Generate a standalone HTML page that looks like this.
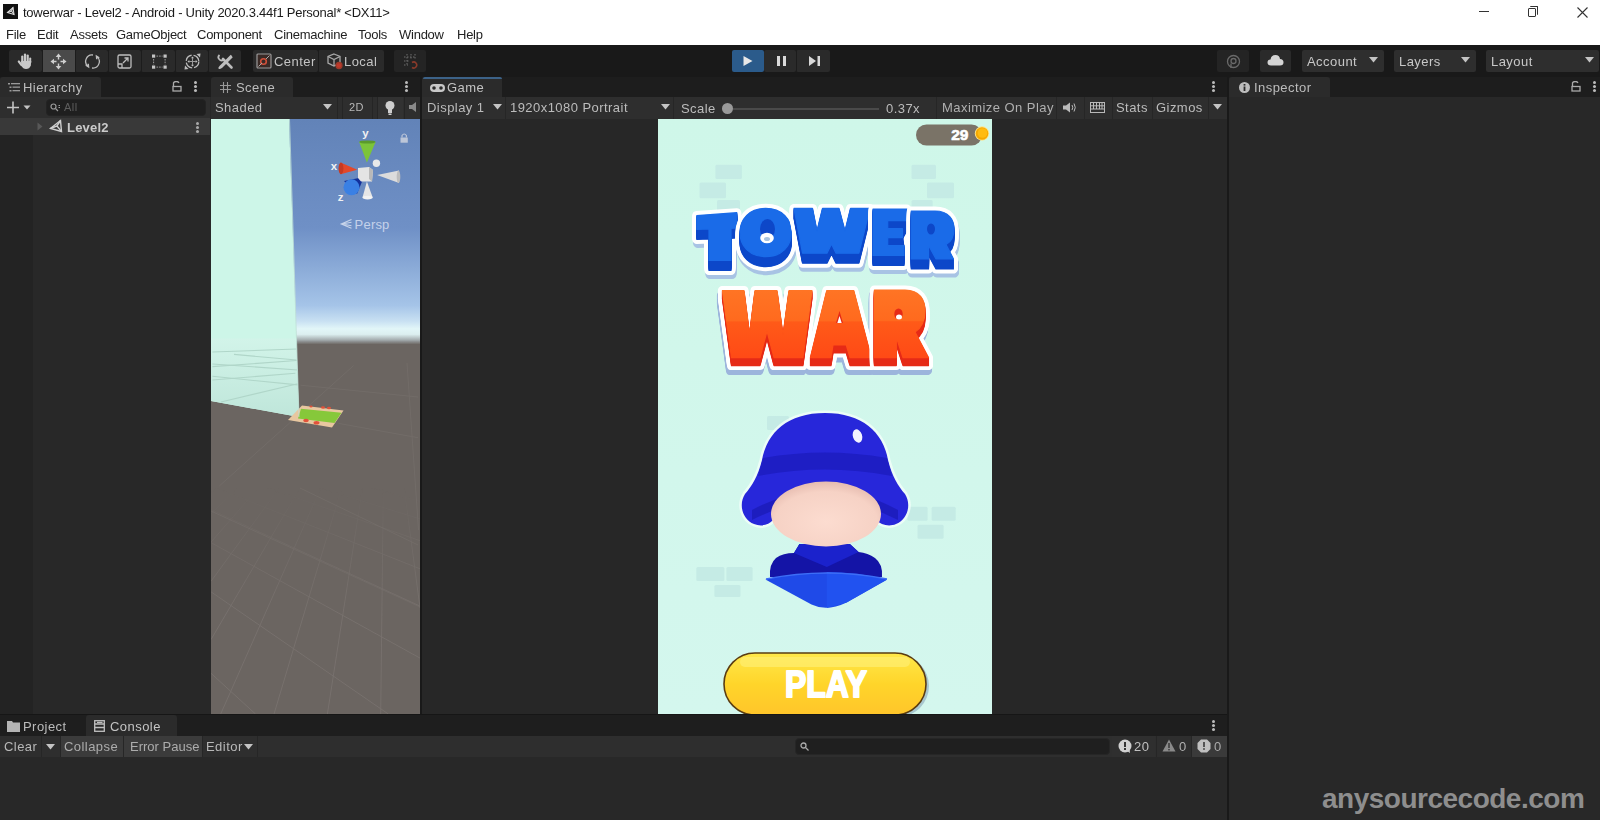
<!DOCTYPE html>
<html><head><meta charset="utf-8">
<style>
*{margin:0;padding:0;box-sizing:border-box}
html,body{width:1600px;height:820px;overflow:hidden;background:#282828;font-family:"Liberation Sans",sans-serif}
.a{position:absolute}
.t{color:#1a1a1a;font-size:13px;white-space:nowrap;letter-spacing:-0.24px;will-change:transform}
.m{position:absolute;color:#222;font-size:13px;white-space:nowrap;top:27px;letter-spacing:-0.25px;will-change:transform}
.b{position:absolute;background:#2a2a2a;border-radius:2px;top:50px;height:22px}
.lt{position:absolute;color:#c4c4c4;font-size:13px;white-space:nowrap;letter-spacing:0.45px;will-change:transform}
.tab{position:absolute;top:77px;height:20px;background:#2b2b2b;border-radius:3px 3px 0 0}
.bar{position:absolute;background:#2e2e2e}
.sep{position:absolute;background:#232323;width:1px}
</style></head><body>
<!-- title bar -->
<div class="a" style="left:0;top:0;width:1600px;height:45px;background:#fff"></div>
<div class="a" style="left:3px;top:4px;width:15px;height:15px;background:#111"></div><svg class="a" style="left:5px;top:6px" width="11" height="11" viewBox="0 0 11 11" fill="none" stroke="#ddd" stroke-width="1.1"><path d="M8 1.5L9 8.5L2.5 6.5Z"/><path d="M2.5 6.5L6.5 5L8 1.5M6.5 5L9 8.5"/></svg>
<div class="a t" style="left:23px;top:5px">towerwar - Level2 - Android - Unity 2020.3.44f1 Personal* &lt;DX11&gt;</div>
<div class="m" style="left:6px">File</div>
<div class="m" style="left:37px">Edit</div>
<div class="m" style="left:70px">Assets</div>
<div class="m" style="left:116px">GameObject</div>
<div class="m" style="left:197px">Component</div>
<div class="m" style="left:274px">Cinemachine</div>
<div class="m" style="left:358px">Tools</div>
<div class="m" style="left:399px">Window</div>
<div class="m" style="left:457px">Help</div>
<!-- window controls -->
<div class="a" style="left:1479px;top:11px;width:10px;height:1px;background:#333"></div>
<div class="a" style="left:1528px;top:8px;width:8px;height:9px;border:1px solid #333;border-radius:1px"></div>
<div class="a" style="left:1530px;top:6px;width:8px;height:9px;border-top:1px solid #333;border-right:1px solid #333;border-radius:1px"></div>
<svg class="a" style="left:1577px;top:7px" width="11" height="11"><path d="M0.5 0.5L10.5 10.5M10.5 0.5L0.5 10.5" stroke="#333" stroke-width="1.1"/></svg>

<!-- main toolbar -->
<div class="a" style="left:0;top:45px;width:1600px;height:32px;background:#191919"></div>

<div class="b" style="left:9px;width:33px"></div>
<div class="b" style="left:42px;width:33px;background:#4a4a4a;border-radius:0"></div>
<div class="b" style="left:75px;width:33px"></div>
<div class="b" style="left:108px;width:33px"></div>
<div class="b" style="left:141px;width:34px"></div>
<div class="b" style="left:175px;width:33px"></div>
<div class="b" style="left:208px;width:33px"></div>
<div class="sep" style="left:42px;top:50px;height:22px;background:#1c1c1c"></div>
<div class="sep" style="left:75px;top:50px;height:22px;background:#1c1c1c"></div>
<div class="sep" style="left:108px;top:50px;height:22px;background:#1c1c1c"></div>
<div class="sep" style="left:141px;top:50px;height:22px;background:#1c1c1c"></div>
<div class="sep" style="left:175px;top:50px;height:22px;background:#1c1c1c"></div>
<div class="sep" style="left:208px;top:50px;height:22px;background:#1c1c1c"></div>
<!-- hand -->
<svg class="a" style="left:17px;top:52px" width="17" height="18" viewBox="0 0 17 18"><g stroke="#c8c8c8" stroke-linecap="round" fill="none"><path d="M5.3 10V4.5" stroke-width="2.2"/><path d="M8 9.5V2.5" stroke-width="2.2"/><path d="M10.7 9.5V3.5" stroke-width="2.2"/><path d="M13.2 10.5V6.5" stroke-width="2"/><path d="M1.8 9.5L4.5 13" stroke-width="2.2"/></g><path d="M4.2 9H14.3L13.8 13.5Q12.5 17 9 17Q6 17 4.2 13.5Z" fill="#c8c8c8"/></svg>
<!-- move -->
<svg class="a" style="left:50px;top:53px" width="17" height="17" viewBox="0 0 17 17"><g stroke="#d0d0d0" stroke-width="1.4" fill="none"><path d="M8.5 4V6.5M8.5 10.5V13M4 8.5H6.5M10.5 8.5H13"/></g><g fill="#d0d0d0"><path d="M8.5 0.5L11.3 4H5.7Z"/><path d="M8.5 16.5L11.3 13H5.7Z"/><path d="M0.5 8.5L4 5.7V11.3Z"/><path d="M16.5 8.5L13 5.7V11.3Z"/></g></svg>
<!-- rotate -->
<svg class="a" style="left:84px;top:53px" width="17" height="17" viewBox="0 0 17 17" fill="none" stroke="#bdbdbd" stroke-width="1.3"><path d="M9 2A6.5 6.5 0 0 0 4.5 13.8"/><path d="M8 15A6.5 6.5 0 0 0 12.5 3.2"/><path d="M1.8 12.2L4.5 13.8L4.2 10.8" stroke-width="1.5"/><path d="M15.2 4.8L12.5 3.2L12.8 6.2" stroke-width="1.5"/></svg>
<!-- scale -->
<svg class="a" style="left:116px;top:53px" width="17" height="17" viewBox="0 0 17 17" fill="none" stroke="#bdbdbd" stroke-width="1.3"><rect x="2" y="2" width="13" height="13" rx="1.5"/><path d="M2 11H6V15"/><path d="M7 10L12 5M8.5 5H12V8.5"/></svg>
<!-- rect -->
<svg class="a" style="left:150px;top:52px" width="19" height="19" viewBox="0 0 19 19"><g fill="#c4c4c4"><rect x="2" y="2.5" width="3.2" height="3.2"/><rect x="13.5" y="2.5" width="3.2" height="3.2"/><rect x="2" y="13.5" width="3.2" height="3.2"/><rect x="13.5" y="13.5" width="3.2" height="3.2"/></g><path d="M6.5 4.1H12.5M6.5 15.1H12.5M3.6 7V12.5M15.1 7V12.5" stroke="#9a9a9a" stroke-width="1" stroke-dasharray="1.6 1"/></svg>
<!-- transform -->
<svg class="a" style="left:183px;top:52px" width="19" height="19" viewBox="0 0 19 19" fill="none" stroke="#bdbdbd"><circle cx="9.5" cy="9.5" r="6.3" stroke-width="1.3" stroke-dasharray="8 2"/><g fill="#bdbdbd" stroke="none"><path d="M9.5 4.5L11 6.3H8Z"/><path d="M9.5 14.5L11 12.7H8Z"/><path d="M4.5 9.5L6.3 8V11Z"/><path d="M14.5 9.5L12.7 8V11Z"/><path d="M17.5 1.5L17 5.5L13.5 2Z"/><path d="M1.5 17.5L2 13.5L5.5 17Z"/></g><path d="M9.5 6V13M6 9.5H13" stroke-width="1" stroke="#9a9a9a"/></svg>
<!-- custom tools -->
<svg class="a" style="left:216px;top:52px" width="19" height="19" viewBox="0 0 19 19" fill="none" stroke="#bdbdbd"><path d="M7 7L15.5 15.5" stroke-width="2.6" stroke-linecap="round"/><path d="M3.5 3A3 3 0 0 0 7.5 7.5" stroke-width="1.8"/><path d="M15.5 3.5L5 14L3.5 16L5.5 15L16 4.5" stroke-width="2.2" stroke-linejoin="round"/></svg>
<!-- center/local -->
<div class="b" style="left:253px;width:65px"></div>
<div class="b" style="left:318px;width:66px"></div>
<div class="sep" style="left:318px;top:50px;height:22px;background:#1c1c1c"></div>
<svg class="a" style="left:256px;top:53px" width="16" height="16" viewBox="0 0 16 16"><rect x="1" y="1" width="14" height="14" rx="1" fill="#3a2a26" stroke="#9a9a9a" stroke-width="1.2"/><circle cx="7.5" cy="8.5" r="2.8" fill="none" stroke="#d0503a" stroke-width="1.6"/><path d="M2.5 13.5L6 10M10 6L13.5 2.5" stroke="#aaa" stroke-width="1"/></svg>
<div class="lt" style="left:274px;top:54px">Center</div>
<svg class="a" style="left:326px;top:52px" width="18" height="18" viewBox="0 0 18 18" fill="none" stroke="#a8a8a8" stroke-width="1.3"><path d="M8 2L14 4.5V11L8 14L2 11V4.5Z"/><path d="M2 4.5L8 7.5L14 4.5M8 7.5V14"/><circle cx="13" cy="13.5" r="3" fill="#c0392b" stroke="#9a3a2a"/></svg>
<div class="lt" style="left:344px;top:54px">Local</div>
<!-- snap -->
<div class="b" style="left:394px;width:32px;background:#242424"></div>
<svg class="a" style="left:402px;top:52px" width="18" height="18" viewBox="0 0 18 18" fill="none" stroke="#6e6e6e" stroke-width="1"><path d="M5 2V14M9 2V8M13 2V8M2 5H14M2 9H8M2 13H6" stroke-dasharray="1.5 1.5"/><path d="M10 10.5A3 3 0 1 1 10 15.5" stroke="#8a3a2a" stroke-width="1.6"/></svg>
<!-- play controls -->
<div class="b" style="left:732px;width:32px;background:#2b5b8b"></div>
<div class="b" style="left:764px;width:32px"></div>
<div class="b" style="left:796px;width:34px"></div>
<div class="sep" style="left:796px;top:50px;height:22px;background:#1c1c1c"></div>
<svg class="a" style="left:742px;top:55px" width="12" height="12" viewBox="0 0 12 12"><path d="M1.5 1L10.5 6L1.5 11Z" fill="#e8e8e8"/></svg>
<div class="a" style="left:777px;top:56px;width:3px;height:10px;background:#dadada"></div>
<div class="a" style="left:783px;top:56px;width:3px;height:10px;background:#dadada"></div>
<svg class="a" style="left:808px;top:55px" width="14" height="12" viewBox="0 0 14 12"><path d="M1 1L8 6L1 11Z" fill="#d8d8d8"/><rect x="9.5" y="1" width="2.5" height="10" fill="#d8d8d8"/></svg>
<!-- right toolbar -->
<div class="b" style="left:1217px;width:32px;background:#242424"></div>
<svg class="a" style="left:1225px;top:53px" width="17" height="17" viewBox="0 0 17 17" fill="none" stroke="#6a6a6a" stroke-width="1.3"><circle cx="8.5" cy="8.5" r="6"/><circle cx="8.5" cy="8" r="2.5"/><path d="M6 10.5V15"/></svg>
<div class="b" style="left:1260px;width:31px"></div>
<svg class="a" style="left:1267px;top:54px" width="17" height="12" viewBox="0 0 17 12"><path d="M4 11.5Q0.5 11.5 0.5 8.5Q0.5 5.8 3.5 5.6Q4 1 8.5 1Q12.5 1 13 5Q16.5 5.2 16.5 8.3Q16.5 11.5 13 11.5Z" fill="#d4d4d4"/></svg>
<div class="b" style="left:1302px;width:82px;background:#2e2e2e"></div>
<div class="lt" style="left:1307px;top:54px;color:#c8c8c8">Account</div>
<svg class="a" style="left:1369px;top:57px" width="9" height="6"><path d="M0 0H9L4.5 5.5Z" fill="#c4c4c4"/></svg>
<div class="b" style="left:1394px;width:82px;background:#2e2e2e"></div>
<div class="lt" style="left:1399px;top:54px;color:#c8c8c8">Layers</div>
<svg class="a" style="left:1461px;top:57px" width="9" height="6"><path d="M0 0H9L4.5 5.5Z" fill="#c4c4c4"/></svg>
<div class="b" style="left:1486px;width:113px;background:#2e2e2e"></div>
<div class="lt" style="left:1491px;top:54px;color:#c8c8c8">Layout</div>
<svg class="a" style="left:1585px;top:57px" width="9" height="6"><path d="M0 0H9L4.5 5.5Z" fill="#c4c4c4"/></svg>


<!-- tab strip -->
<div class="a" style="left:0;top:77px;width:1600px;height:20px;background:#1d1d1d"></div>

<!-- Hierarchy panel -->
<div class="a" style="left:0;top:97px;width:210px;height:617px;background:#282828"></div>
<div class="a" style="left:0;top:135px;width:33px;height:579px;background:#232323"></div>
<div class="tab" style="left:0;width:101px"></div>
<svg class="a" style="left:8px;top:82px" width="12" height="11" viewBox="0 0 12 11" fill="#9a9a9a"><rect x="0" y="1" width="2" height="1.5"/><rect x="3" y="1" width="9" height="1.3"/><rect x="1.5" y="4.5" width="2" height="1.5"/><rect x="4.5" y="4.5" width="7.5" height="1.3"/><rect x="1.5" y="8" width="2" height="1.5"/><rect x="4.5" y="8" width="7.5" height="1.3"/></svg>
<div class="lt" style="left:23px;top:80px;color:#bcbcbc">Hierarchy</div>
<svg class="a" style="left:172px;top:81px" width="10" height="11" viewBox="0 0 10 11" fill="none" stroke="#aaa" stroke-width="1.3"><path d="M1.5 5.5V1.8A3 2.2 0 0 1 7 1.8"/><rect x="1" y="5.5" width="8" height="4.5"/></svg>
<div class="a" style="left:194px;top:81px;width:3px;height:3px;background:#bbb;border-radius:50%;box-shadow:0 4px 0 #bbb,0 8px 0 #bbb"></div>
<div class="bar" style="left:0;top:97px;width:210px;height:21px"></div>
<svg class="a" style="left:6px;top:101px" width="26" height="13" viewBox="0 0 26 13"><path d="M7 0.5V12.5M1 6.5H13" stroke="#c4c4c4" stroke-width="1.6"/><path d="M17.5 4.5H24.5L21 8.5Z" fill="#c4c4c4"/></svg>
<div class="a" style="left:46px;top:99px;width:160px;height:17px;background:#1f1f1f;border-radius:4px;border:1px solid #232323"></div>
<svg class="a" style="left:50px;top:103px" width="11" height="9" viewBox="0 0 11 9" fill="none" stroke="#9a9a9a" stroke-width="1.2"><circle cx="3.5" cy="3.5" r="2.5"/><path d="M5.5 5.5L8 8M8.5 2.5H10M8.5 4.5H10"/></svg>
<div class="lt" style="left:64px;top:101px;font-size:11px;color:#5e5e5e">All</div>
<div class="a" style="left:0;top:118px;width:210px;height:17px;background:#393939"></div>
<svg class="a" style="left:37px;top:122px" width="6" height="9"><path d="M0.5 0.5L5.5 4.5L0.5 8.5Z" fill="#585858"/></svg>
<svg class="a" style="left:48px;top:119px" width="16" height="15" viewBox="0 0 16 15" fill="none" stroke="#cfcfcf" stroke-width="1.4"><path d="M12.5 1.5L13.5 12.5L2.5 9.5Z"/><path d="M2.5 9.5L9 7L12.5 1.5M9 7L13.5 12.5"/></svg>
<div class="lt" style="left:67px;top:120px;color:#cacaca;font-weight:bold;font-size:13px;letter-spacing:0.2px">Level2</div>
<div class="a" style="left:196px;top:122px;width:3px;height:3px;background:#aaa;border-radius:50%;box-shadow:0 4px 0 #aaa,0 8px 0 #aaa"></div>

<!-- Scene panel -->
<div class="tab" style="left:211px;width:82px"></div>
<svg class="a" style="left:220px;top:82px" width="11" height="11" viewBox="0 0 11 11" stroke="#999" stroke-width="1.1"><path d="M3.5 0V11M7.5 0V11M0 3.5H11M0 7.5H11"/></svg>
<div class="lt" style="left:236px;top:80px;color:#bcbcbc">Scene</div>
<div class="a" style="left:405px;top:81px;width:3px;height:3px;background:#bbb;border-radius:50%;box-shadow:0 4px 0 #bbb,0 8px 0 #bbb"></div>
<div class="bar" style="left:211px;top:97px;width:209px;height:22px"></div>
<div class="lt" style="left:215px;top:100px;color:#bcbcbc">Shaded</div>
<svg class="a" style="left:323px;top:104px" width="9" height="6"><path d="M0 0H9L4.5 5.5Z" fill="#c4c4c4"/></svg>
<div class="sep" style="left:337px;top:97px;height:22px;background:#252525"></div>
<div class="sep" style="left:342px;top:97px;height:22px;background:#252525"></div>
<div class="lt" style="left:349px;top:101px;font-size:11px;color:#b8b8b8">2D</div>
<div class="sep" style="left:372px;top:97px;height:22px;background:#252525"></div>
<div class="sep" style="left:377px;top:97px;height:22px;background:#252525"></div>
<div class="a" style="left:378px;top:97px;width:25px;height:22px;background:#323232"></div>
<svg class="a" style="left:384px;top:100px" width="12" height="16" viewBox="0 0 12 16" fill="#cfcfcf"><circle cx="6" cy="5.5" r="4.5"/><rect x="4" y="9" width="4" height="4"/><rect x="4.5" y="13.5" width="3" height="1.5"/></svg>
<div class="sep" style="left:404px;top:97px;height:22px;background:#252525"></div>
<svg class="a" style="left:409px;top:101px" width="11" height="12" viewBox="0 0 11 12" fill="#8a8a8a"><rect x="0" y="4" width="3" height="4"/><path d="M3 4L7 1V11L3 8Z"/></svg>

<svg class="a" style="left:211px;top:119px" width="209" height="595" viewBox="0 0 209 595">
<defs>
<linearGradient id="sky" x1="0" y1="0" x2="0" y2="1"><stop offset="0" stop-color="#6283b8"/><stop offset="0.49" stop-color="#6f90c6"/><stop offset="0.84" stop-color="#a5c4e8"/><stop offset="0.91" stop-color="#c8e0f2"/><stop offset="0.945" stop-color="#e2f6f8"/><stop offset="0.97" stop-color="#dceff0"/><stop offset="1" stop-color="#9aa0a2"/></linearGradient>
<linearGradient id="hz" x1="0" y1="0" x2="0" y2="1"><stop offset="0" stop-color="#9aa0a2"/><stop offset="1" stop-color="#6b6561"/></linearGradient>
<linearGradient id="mg" x1="0" y1="0" x2="0" y2="1"><stop offset="0" stop-color="#d2f4e9"/><stop offset="1" stop-color="#bfe6da"/></linearGradient>
<linearGradient id="gf" x1="0" y1="0" x2="0" y2="1"><stop offset="0" stop-color="#000"/><stop offset="0.62" stop-color="#000"/><stop offset="0.72" stop-color="#888"/><stop offset="0.84" stop-color="#fff"/><stop offset="1" stop-color="#fff"/></linearGradient><mask id="gm"><rect x="0" y="0" width="209" height="595" fill="url(#gf)"/></mask><clipPath id="mc"><path d="M0 219.5H85.2L88 298L0 282Z"/></clipPath>
</defs>
<rect x="0" y="0" width="209" height="222" fill="url(#sky)"/>
<rect x="0" y="221.5" width="209" height="4" fill="url(#hz)"/>
<rect x="0" y="225" width="209" height="370" fill="#6b6561"/>
<g stroke="#726c68" stroke-width="1" fill="none"><line x1="8.3" y1="367.0" x2="142.7" y2="246.5"/><line x1="127.6" y1="304.4" x2="207.0" y2="318.7"/><line x1="89.4" y1="266.2" x2="207.0" y2="278.0"/><line x1="196.0" y1="244.0" x2="207.5" y2="411.0"/><line x1="0.0" y1="392.0" x2="209.0" y2="488.0"/><line x1="89.0" y1="369.0" x2="207.0" y2="426.0"/></g><g stroke="#78726e" stroke-width="0.9" fill="none" mask="url(#gm)"><line x1="-0.0" y1="554.3" x2="44.5" y2="595.0"/><line x1="0.0" y1="472.8" x2="177.3" y2="595.0"/><line x1="0.0" y1="423.6" x2="209.0" y2="539.1"/><line x1="0.0" y1="390.6" x2="209.0" y2="487.1"/><line x1="0.0" y1="367.0" x2="209.0" y2="449.8"/><line x1="0.0" y1="349.2" x2="209.0" y2="421.7"/><line x1="0.0" y1="335.4" x2="209.0" y2="399.9"/><line x1="0.0" y1="324.3" x2="209.0" y2="382.4"/><line x1="0.0" y1="315.2" x2="209.0" y2="368.1"/><line x1="0.0" y1="307.7" x2="209.0" y2="356.1"/><line x1="0.0" y1="301.3" x2="209.0" y2="346.0"/><line x1="0.0" y1="295.8" x2="209.0" y2="337.3"/><line x1="0.0" y1="291.0" x2="209.0" y2="329.8"/><line x1="0.0" y1="286.8" x2="209.0" y2="323.2"/><line x1="0.0" y1="283.1" x2="209.0" y2="317.4"/><line x1="0.0" y1="279.9" x2="209.0" y2="312.2"/><line x1="-0.0" y1="276.9" x2="209.0" y2="307.6"/><line x1="0.0" y1="274.3" x2="209.0" y2="303.4"/><line x1="0.0" y1="271.9" x2="209.0" y2="299.6"/><line x1="0.0" y1="269.7" x2="209.0" y2="296.2"/><line x1="0.0" y1="267.7" x2="209.0" y2="293.1"/><line x1="0.0" y1="265.9" x2="209.0" y2="290.2"/><line x1="0.0" y1="264.3" x2="209.0" y2="287.6"/><line x1="0.0" y1="262.7" x2="209.0" y2="285.1"/><line x1="0.0" y1="261.3" x2="209.0" y2="282.9"/><line x1="0.0" y1="260.0" x2="209.0" y2="280.8"/><line x1="0.0" y1="258.7" x2="209.0" y2="278.8"/><line x1="0.0" y1="257.6" x2="209.0" y2="277.0"/><line x1="0.0" y1="256.5" x2="209.0" y2="275.3"/><line x1="0.0" y1="255.5" x2="209.0" y2="273.7"/><line x1="0.0" y1="254.5" x2="209.0" y2="272.2"/><line x1="0.0" y1="253.6" x2="209.0" y2="270.8"/><line x1="0.0" y1="252.8" x2="209.0" y2="269.4"/><line x1="0.0" y1="252.0" x2="209.0" y2="268.2"/><line x1="0.0" y1="251.2" x2="209.0" y2="267.0"/><line x1="0.0" y1="250.5" x2="209.0" y2="265.8"/><line x1="0.0" y1="249.8" x2="209.0" y2="264.8"/><line x1="0.0" y1="249.2" x2="209.0" y2="263.8"/><line x1="0.0" y1="248.6" x2="209.0" y2="262.8"/><line x1="0.0" y1="248.0" x2="209.0" y2="261.9"/><line x1="0.0" y1="247.4" x2="209.0" y2="261.0"/><line x1="176.6" y1="226.0" x2="209.0" y2="251.3"/><line x1="176.3" y1="226.0" x2="209.0" y2="254.7"/><line x1="176.0" y1="226.0" x2="209.0" y2="259.2"/><line x1="175.7" y1="226.0" x2="209.0" y2="265.1"/><line x1="175.4" y1="226.0" x2="209.0" y2="273.5"/><line x1="175.1" y1="226.0" x2="209.0" y2="286.1"/><line x1="174.8" y1="226.0" x2="209.0" y2="307.4"/><line x1="174.6" y1="226.0" x2="209.0" y2="350.9"/><line x1="174.3" y1="226.0" x2="209.0" y2="488.9"/><line x1="174.0" y1="226.0" x2="169.7" y2="595.0"/><line x1="173.7" y1="226.0" x2="116.4" y2="595.0"/><line x1="173.4" y1="226.0" x2="63.0" y2="595.0"/><line x1="173.1" y1="226.0" x2="9.7" y2="595.0"/><line x1="172.8" y1="226.0" x2="0.0" y2="520.6"/><line x1="172.5" y1="226.0" x2="0.0" y2="462.3"/><line x1="172.3" y1="226.0" x2="-0.0" y2="423.1"/><line x1="172.0" y1="226.0" x2="0.0" y2="395.0"/><line x1="171.7" y1="226.0" x2="0.0" y2="373.8"/><line x1="171.4" y1="226.0" x2="0.0" y2="357.3"/><line x1="171.1" y1="226.0" x2="0.0" y2="344.1"/><line x1="170.8" y1="226.0" x2="-0.0" y2="333.2"/><line x1="170.5" y1="226.0" x2="0.0" y2="324.2"/><line x1="170.2" y1="226.0" x2="0.0" y2="316.5"/><line x1="170.0" y1="226.0" x2="0.0" y2="310.0"/><line x1="169.7" y1="226.0" x2="0.0" y2="304.3"/><line x1="169.4" y1="226.0" x2="0.0" y2="299.3"/><line x1="169.1" y1="226.0" x2="0.0" y2="294.9"/><line x1="168.8" y1="226.0" x2="0.0" y2="291.0"/><line x1="168.5" y1="226.0" x2="0.0" y2="287.4"/><line x1="168.2" y1="226.0" x2="0.0" y2="284.3"/><line x1="167.9" y1="226.0" x2="0.0" y2="281.4"/><line x1="167.7" y1="226.0" x2="0.0" y2="278.8"/><line x1="167.4" y1="226.0" x2="0.0" y2="276.4"/><line x1="167.1" y1="226.0" x2="0.0" y2="274.3"/><line x1="166.8" y1="226.0" x2="0.0" y2="272.3"/><line x1="166.5" y1="226.0" x2="0.0" y2="270.4"/><line x1="166.2" y1="226.0" x2="0.0" y2="268.7"/><line x1="165.9" y1="226.0" x2="0.0" y2="267.1"/><line x1="165.6" y1="226.0" x2="0.0" y2="265.6"/><line x1="165.4" y1="226.0" x2="0.0" y2="264.2"/><line x1="165.1" y1="226.0" x2="0.0" y2="262.9"/><line x1="164.8" y1="226.0" x2="0.0" y2="261.7"/><line x1="164.5" y1="226.0" x2="0.0" y2="260.6"/><line x1="164.2" y1="226.0" x2="0.0" y2="259.5"/><line x1="163.9" y1="226.0" x2="0.0" y2="258.5"/><line x1="163.6" y1="226.0" x2="0.0" y2="257.6"/><line x1="163.3" y1="226.0" x2="0.0" y2="256.6"/><line x1="163.1" y1="226.0" x2="0.0" y2="255.8"/><line x1="162.8" y1="226.0" x2="0.0" y2="255.0"/><line x1="162.5" y1="226.0" x2="0.0" y2="254.2"/><line x1="162.2" y1="226.0" x2="0.0" y2="253.5"/><line x1="161.9" y1="226.0" x2="0.0" y2="252.8"/><line x1="161.6" y1="226.0" x2="0.0" y2="252.1"/><line x1="161.3" y1="226.0" x2="0.0" y2="251.5"/><line x1="161.0" y1="226.0" x2="0.0" y2="250.9"/><line x1="160.8" y1="226.0" x2="-0.0" y2="250.3"/><line x1="160.5" y1="226.0" x2="0.0" y2="249.7"/><line x1="160.2" y1="226.0" x2="0.0" y2="249.2"/><line x1="159.9" y1="226.0" x2="0.0" y2="248.7"/><line x1="159.6" y1="226.0" x2="0.0" y2="248.2"/><line x1="159.3" y1="226.0" x2="0.0" y2="247.7"/><line x1="159.0" y1="226.0" x2="0.0" y2="247.2"/><line x1="158.7" y1="226.0" x2="0.0" y2="246.8"/><line x1="158.5" y1="226.0" x2="0.0" y2="246.4"/><line x1="158.2" y1="226.0" x2="0.0" y2="246.0"/><line x1="157.9" y1="226.0" x2="0.0" y2="245.6"/><line x1="157.6" y1="226.0" x2="0.0" y2="245.2"/><line x1="157.3" y1="226.0" x2="0.0" y2="244.8"/><line x1="157.0" y1="226.0" x2="0.0" y2="244.5"/><line x1="156.7" y1="226.0" x2="0.0" y2="244.1"/><line x1="156.4" y1="226.0" x2="0.0" y2="243.8"/><line x1="156.2" y1="226.0" x2="0.0" y2="243.5"/><line x1="155.9" y1="226.0" x2="0.0" y2="243.2"/><line x1="155.6" y1="226.0" x2="0.0" y2="242.9"/><line x1="155.3" y1="226.0" x2="0.0" y2="242.6"/><line x1="155.0" y1="226.0" x2="0.0" y2="242.3"/><line x1="154.7" y1="226.0" x2="0.0" y2="242.0"/><line x1="154.4" y1="226.0" x2="0.0" y2="241.8"/><line x1="154.1" y1="226.0" x2="0.0" y2="241.5"/><line x1="153.9" y1="226.0" x2="0.0" y2="241.3"/><line x1="153.6" y1="226.0" x2="0.0" y2="241.0"/><line x1="153.3" y1="226.0" x2="0.0" y2="240.8"/><line x1="153.0" y1="226.0" x2="0.0" y2="240.6"/><line x1="152.7" y1="226.0" x2="0.0" y2="240.3"/><line x1="152.4" y1="226.0" x2="0.0" y2="240.1"/><line x1="152.1" y1="226.0" x2="0.0" y2="239.9"/><line x1="151.8" y1="226.0" x2="0.0" y2="239.7"/><line x1="151.6" y1="226.0" x2="0.0" y2="239.5"/><line x1="151.3" y1="226.0" x2="0.0" y2="239.3"/><line x1="151.0" y1="226.0" x2="0.0" y2="239.1"/><line x1="150.7" y1="226.0" x2="0.0" y2="238.9"/><line x1="150.4" y1="226.0" x2="0.0" y2="238.7"/></g>
<path d="M0 0H78L88 298L0 282Z" fill="#cdf6e8"/>
<path d="M0 219.5H85.2L88 298L0 282Z" fill="url(#mg)"/>
<g stroke="#b0d6c9" stroke-width="1.1" fill="none" clip-path="url(#mc)"><line x1="85.6" y1="241.5" x2="1.4" y2="247.6"/><line x1="84.4" y1="254.3" x2="1.4" y2="261.0"/><line x1="86.8" y1="264.7" x2="10.0" y2="283.0"/><line x1="1.4" y1="245.0" x2="86.8" y2="251.0"/><line x1="1.4" y1="257.3" x2="86.8" y2="265.9"/><line x1="23.0" y1="235.4" x2="85.6" y2="241.0"/><line x1="1.4" y1="233.0" x2="85.6" y2="230.0"/></g>
<path d="M91.0 286.5 L132.5 291.5 L121.0 308.6 L77.0 301.0Z" fill="#e8c7a0"/><path d="M90.0 289.8 L130.5 293.8 L123.5 304.0 L87.0 299.5Z" fill="#86c83a"/><g fill="#e2523a"><ellipse cx="95.0" cy="301.5" rx="2.8" ry="1.8"/><ellipse cx="105.5" cy="303.8" rx="3" ry="1.8"/><ellipse cx="112.0" cy="288.5" rx="2" ry="1.2"/><ellipse cx="118.0" cy="289.0" rx="2" ry="1.2"/><ellipse cx="100.0" cy="287.5" rx="1.6" ry="1"/></g><path d="M78.5 0L88 298" stroke="#bfe0d6" stroke-width="0.8"/>
<!-- gizmo -->
<path d="M148.2 23 L164.6 23 L155.9 43.5Z" fill="#7cc43a"/>
<ellipse cx="156.4" cy="23" rx="8.2" ry="1.6" fill="#5b9a2c"/>
<path d="M129.5 43.5 L146.3 50.8 L129.5 55.2Z" fill="#e3482a"/>
<ellipse cx="130" cy="49.4" rx="2.4" ry="5.8" fill="#c63a22"/>
<path d="M188 51.5 L166.1 55.9 L188 64Z" fill="#dcdcdc"/>
<ellipse cx="187.5" cy="57.8" rx="1.8" ry="6.2" fill="#bdbdbd"/>
<path d="M133 62 L152.9 58.1 L146 75Z" fill="#12309a"/>
<circle cx="140.5" cy="68.3" r="8" fill="#3a80e4"/>
<path d="M155.9 62.5 L151.5 78.6 L161.7 78.6Z" fill="#e6e6e6"/>
<ellipse cx="156.6" cy="78.6" rx="5.1" ry="1.8" fill="#f2f2f2"/>
<path d="M147 49 L158 47.9 L162 51 L161 62.5 L150 62.5 L147 59Z" fill="#e4e4e4"/>
<path d="M158 47.9 L162 51 L161 62.5 L158 60Z" fill="#b9b9b9"/>
<circle cx="165.4" cy="44.2" r="3.7" fill="#e9e9e9"/>
<text x="154.4" y="17.5" text-anchor="middle" font-family="Liberation Sans" font-weight="bold" font-size="11.5" fill="#f2f2f2">y</text>
<text x="122.9" y="51" text-anchor="middle" font-family="Liberation Sans" font-weight="bold" font-size="11.5" fill="#f2f2f2">x</text>
<text x="129.5" y="82" text-anchor="middle" font-family="Liberation Sans" font-weight="bold" font-size="11.5" fill="#f2f2f2">z</text>
<path d="M140.5 100.6 L130.2 105 L140.5 109.3 M131 105 L140.5 103.3 M131 105 L140.5 106.7" stroke="#c7d4ea" stroke-width="1.1" fill="none"/>
<text x="143.6" y="110" font-family="Liberation Sans" font-size="13" fill="#c5d2ea" letter-spacing="0.2">Persp</text>
<rect x="189.5" y="18.5" width="7.3" height="5.2" fill="#bcc6d8"/><path d="M191 18.5 V16.5 Q193.2 13.5 195.4 16.5 V18.5" stroke="#bcc6d8" stroke-width="1.2" fill="none"/>
</svg>
<div class="a" style="left:420px;top:77px;width:2px;height:637px;background:#191919"></div>

<!-- Game panel -->
<div class="a" style="left:422px;top:97px;width:806px;height:617px;background:#272727"></div>
<div class="tab" style="left:422px;width:80px"></div>
<div class="a" style="left:423px;top:77px;width:79px;height:2px;background:#3c6288;border-radius:2px 2px 0 0"></div>
<svg class="a" style="left:430px;top:84px" width="15" height="8" viewBox="0 0 15 8"><rect x="0" y="0" width="15" height="8" rx="4" fill="#c8c8c8"/><circle cx="4" cy="4" r="1.8" fill="#2b2b2b"/><circle cx="11" cy="4" r="1.8" fill="#2b2b2b"/></svg>
<div class="lt" style="left:447px;top:80px;color:#c4c4c4">Game</div>
<div class="a" style="left:1212px;top:81px;width:3px;height:3px;background:#bbb;border-radius:50%;box-shadow:0 4px 0 #bbb,0 8px 0 #bbb"></div>
<div class="bar" style="left:422px;top:97px;width:806px;height:22px"></div>
<div class="lt" style="left:427px;top:100px;color:#bcbcbc">Display 1</div>
<svg class="a" style="left:493px;top:104px" width="9" height="6"><path d="M0 0H9L4.5 5.5Z" fill="#c4c4c4"/></svg>
<div class="sep" style="left:505px;top:97px;height:22px;background:#262626"></div>
<div class="lt" style="left:510px;top:100px;color:#bcbcbc">1920x1080 Portrait</div>
<svg class="a" style="left:661px;top:104px" width="9" height="6"><path d="M0 0H9L4.5 5.5Z" fill="#c4c4c4"/></svg>
<div class="sep" style="left:673px;top:97px;height:22px;background:#262626"></div>
<div class="lt" style="left:681px;top:101px;color:#bcbcbc">Scale</div>
<div class="a" style="left:722px;top:108px;width:157px;height:2px;background:#4a4a4a"></div>
<div class="a" style="left:722px;top:103px;width:11px;height:11px;background:#9a9a9a;border-radius:50%"></div>
<div class="lt" style="left:886px;top:101px;color:#bcbcbc">0.37x</div>
<div class="sep" style="left:936px;top:97px;height:22px;background:#262626"></div>
<div class="lt" style="left:942px;top:100px;color:#b0b0b0">Maximize On Play</div>
<div class="sep" style="left:1056px;top:97px;height:22px;background:#262626"></div>
<svg class="a" style="left:1063px;top:102px" width="14" height="11" viewBox="0 0 14 11" fill="#bbb"><rect x="0" y="3.5" width="3" height="4"/><path d="M3 3.5L7 0.5V10.5L3 7.5Z"/><path d="M9 3Q10.5 5.5 9 8M11 1.5Q13.5 5.5 11 9.5" stroke="#bbb" stroke-width="1" fill="none"/></svg>
<div class="sep" style="left:1084px;top:97px;height:22px;background:#262626"></div>
<svg class="a" style="left:1090px;top:102px" width="15" height="11" viewBox="0 0 15 11" fill="none" stroke="#b8b8b8" stroke-width="1"><rect x="0.5" y="0.5" width="14" height="10"/><path d="M0.5 3.8H14.5M0.5 7H14.5M3.5 0.5V7M6.5 0.5V7M9.5 0.5V7M12 0.5V7"/></svg>
<div class="sep" style="left:1112px;top:97px;height:22px;background:#262626"></div>
<div class="lt" style="left:1116px;top:100px;color:#bcbcbc">Stats</div>
<div class="sep" style="left:1152px;top:97px;height:22px;background:#262626"></div>
<div class="lt" style="left:1156px;top:100px;color:#bcbcbc">Gizmos</div>
<div class="sep" style="left:1208px;top:97px;height:22px;background:#262626"></div>
<svg class="a" style="left:1213px;top:104px" width="9" height="6"><path d="M0 0H9L4.5 5.5Z" fill="#c4c4c4"/></svg>
<div class="a" style="left:1227px;top:77px;width:2px;height:743px;background:#191919"></div>
<svg class="a" style="left:658px;top:119px" width="334" height="595" viewBox="658 119 334 595">
<defs>
<linearGradient id="gbg" x1="0" y1="0" x2="0" y2="1"><stop offset="0" stop-color="#cff7e9"/><stop offset="1" stop-color="#d4f7ee"/></linearGradient>
<linearGradient id="war" x1="0" y1="0" x2="0" y2="1"><stop offset="0" stop-color="#ff7424"/><stop offset="0.45" stop-color="#ff6a1e"/><stop offset="0.47" stop-color="#ff5a18"/><stop offset="1" stop-color="#ff4a16"/></linearGradient>
<linearGradient id="tow" x1="0" y1="0" x2="0" y2="1"><stop offset="0" stop-color="#2279ee"/><stop offset="1" stop-color="#1a62e4"/></linearGradient>
<linearGradient id="btn" x1="0" y1="0" x2="0" y2="1"><stop offset="0" stop-color="#ffe84a"/><stop offset="0.5" stop-color="#ffd52a"/><stop offset="1" stop-color="#ffc52a"/></linearGradient>
<radialGradient id="face" cx="0.5" cy="0.62" r="0.62"><stop offset="0" stop-color="#fcdcd0"/><stop offset="0.75" stop-color="#f6d2c5"/><stop offset="1" stop-color="#e6bcb0"/></radialGradient>
</defs>
<rect x="658" y="119" width="335" height="595" fill="url(#gbg)"/>
<g fill="#c5ebe5"><rect x="715.4" y="164.8" width="26.5" height="14.1" rx="1.5"/><rect x="699.5" y="182.4" width="26.5" height="15.9" rx="1.5"/><rect x="717" y="200" width="23.0" height="10.7" rx="1.5"/><rect x="911.5" y="164.8" width="24.5" height="14.1" rx="1.5"/><rect x="927" y="182.4" width="27.0" height="15.9" rx="1.5"/><rect x="911.5" y="200" width="21.2" height="9.0" rx="1.5"/><rect x="767" y="416" width="22.0" height="14.0" rx="1.5"/><rect x="907.4" y="506.7" width="20.2" height="14.0" rx="1.5"/><rect x="931.6" y="506.7" width="24.1" height="14.0" rx="1.5"/><rect x="917.5" y="524.8" width="26.1" height="14.0" rx="1.5"/><rect x="696.3" y="567" width="28.1" height="14.0" rx="1.5"/><rect x="726.4" y="567" width="26.2" height="14.0" rx="1.5"/><rect x="714.4" y="585" width="26.1" height="12.0" rx="1.5"/></g>
<!-- coin pill -->
<rect x="916" y="124.5" width="66" height="21" rx="10.5" fill="#7a7367"/>
<text x="968.5" y="140" font-family="Liberation Sans" font-weight="bold" font-size="15.5" fill="#fff" stroke="#fff" stroke-width="0.6" text-anchor="end">29</text>
<circle cx="982" cy="133.5" r="7.2" fill="#fde48a"/>
<circle cx="982" cy="133.5" r="6.3" fill="#f5a800"/>
<circle cx="982.5" cy="133" r="4.8" fill="#ffbb10"/>
<!-- TOWER -->
<g fill="#a8c3e4" stroke="#a8c3e4" stroke-width="9" stroke-linejoin="round"><path d="M696.8 215.6 L736.8 212.7 L736.8 228.0 L731.0 228.3 L731.0 260.5 L709.0 260.5 L709.0 229.0 L696.8 229.5Z" transform="translate(1,4)"/><path d="M696.8 215.6 L736.8 212.7 L736.8 228.0 L731.0 228.3 L731.0 260.5 L709.0 260.5 L709.0 229.0 L696.8 229.5Z" transform="translate(1,14)"/><path d="M696.8 215.6 L736.8 212.7 L736.8 228.0 L731.0 228.3 L731.0 260.5 L709.0 260.5 L709.0 229.0 L696.8 229.5Z" transform="translate(1,5)"/><path d="M696.8 215.6 L736.8 212.7 L736.8 228.0 L731.0 228.3 L731.0 260.5 L709.0 260.5 L709.0 229.0 L696.8 229.5Z" transform="translate(1,6)"/><path d="M696.8 215.6 L736.8 212.7 L736.8 228.0 L731.0 228.3 L731.0 260.5 L709.0 260.5 L709.0 229.0 L696.8 229.5Z" transform="translate(1,7)"/><path d="M696.8 215.6 L736.8 212.7 L736.8 228.0 L731.0 228.3 L731.0 260.5 L709.0 260.5 L709.0 229.0 L696.8 229.5Z" transform="translate(1,8)"/><path d="M696.8 215.6 L736.8 212.7 L736.8 228.0 L731.0 228.3 L731.0 260.5 L709.0 260.5 L709.0 229.0 L696.8 229.5Z" transform="translate(1,9)"/><path d="M696.8 215.6 L736.8 212.7 L736.8 228.0 L731.0 228.3 L731.0 260.5 L709.0 260.5 L709.0 229.0 L696.8 229.5Z" transform="translate(1,10)"/><path d="M696.8 215.6 L736.8 212.7 L736.8 228.0 L731.0 228.3 L731.0 260.5 L709.0 260.5 L709.0 229.0 L696.8 229.5Z" transform="translate(1,11)"/><path d="M696.8 215.6 L736.8 212.7 L736.8 228.0 L731.0 228.3 L731.0 260.5 L709.0 260.5 L709.0 229.0 L696.8 229.5Z" transform="translate(1,12)"/><path d="M696.8 215.6 L736.8 212.7 L736.8 228.0 L731.0 228.3 L731.0 260.5 L709.0 260.5 L709.0 229.0 L696.8 229.5Z" transform="translate(1,13)"/><path d="M765.7 208.3 C782 208.3 791.4 219 791.4 232.5 C791.4 246 782 256.7 765.7 256.7 C749.4 256.7 740 246 740 232.5 C740 219 749.4 208.3 765.7 208.3Z" transform="translate(1,4)"/><path d="M765.7 208.3 C782 208.3 791.4 219 791.4 232.5 C791.4 246 782 256.7 765.7 256.7 C749.4 256.7 740 246 740 232.5 C740 219 749.4 208.3 765.7 208.3Z" transform="translate(1,14)"/><path d="M765.7 208.3 C782 208.3 791.4 219 791.4 232.5 C791.4 246 782 256.7 765.7 256.7 C749.4 256.7 740 246 740 232.5 C740 219 749.4 208.3 765.7 208.3Z" transform="translate(1,5)"/><path d="M765.7 208.3 C782 208.3 791.4 219 791.4 232.5 C791.4 246 782 256.7 765.7 256.7 C749.4 256.7 740 246 740 232.5 C740 219 749.4 208.3 765.7 208.3Z" transform="translate(1,6)"/><path d="M765.7 208.3 C782 208.3 791.4 219 791.4 232.5 C791.4 246 782 256.7 765.7 256.7 C749.4 256.7 740 246 740 232.5 C740 219 749.4 208.3 765.7 208.3Z" transform="translate(1,7)"/><path d="M765.7 208.3 C782 208.3 791.4 219 791.4 232.5 C791.4 246 782 256.7 765.7 256.7 C749.4 256.7 740 246 740 232.5 C740 219 749.4 208.3 765.7 208.3Z" transform="translate(1,8)"/><path d="M765.7 208.3 C782 208.3 791.4 219 791.4 232.5 C791.4 246 782 256.7 765.7 256.7 C749.4 256.7 740 246 740 232.5 C740 219 749.4 208.3 765.7 208.3Z" transform="translate(1,9)"/><path d="M765.7 208.3 C782 208.3 791.4 219 791.4 232.5 C791.4 246 782 256.7 765.7 256.7 C749.4 256.7 740 246 740 232.5 C740 219 749.4 208.3 765.7 208.3Z" transform="translate(1,10)"/><path d="M765.7 208.3 C782 208.3 791.4 219 791.4 232.5 C791.4 246 782 256.7 765.7 256.7 C749.4 256.7 740 246 740 232.5 C740 219 749.4 208.3 765.7 208.3Z" transform="translate(1,11)"/><path d="M765.7 208.3 C782 208.3 791.4 219 791.4 232.5 C791.4 246 782 256.7 765.7 256.7 C749.4 256.7 740 246 740 232.5 C740 219 749.4 208.3 765.7 208.3Z" transform="translate(1,12)"/><path d="M765.7 208.3 C782 208.3 791.4 219 791.4 232.5 C791.4 246 782 256.7 765.7 256.7 C749.4 256.7 740 246 740 232.5 C740 219 749.4 208.3 765.7 208.3Z" transform="translate(1,13)"/><path d="M794.0 208.4 L812.5 208.4 L817.0 231.0 L822.5 208.4 L839.0 208.4 L845.0 231.0 L850.5 208.4 L870.0 208.4 L858.9 253.2 L836.0 253.2 L831.5 244.0 L827.0 253.2 L802.5 253.2Z" transform="translate(1,4)"/><path d="M794.0 208.4 L812.5 208.4 L817.0 231.0 L822.5 208.4 L839.0 208.4 L845.0 231.0 L850.5 208.4 L870.0 208.4 L858.9 253.2 L836.0 253.2 L831.5 244.0 L827.0 253.2 L802.5 253.2Z" transform="translate(1,14)"/><path d="M794.0 208.4 L812.5 208.4 L817.0 231.0 L822.5 208.4 L839.0 208.4 L845.0 231.0 L850.5 208.4 L870.0 208.4 L858.9 253.2 L836.0 253.2 L831.5 244.0 L827.0 253.2 L802.5 253.2Z" transform="translate(1,5)"/><path d="M794.0 208.4 L812.5 208.4 L817.0 231.0 L822.5 208.4 L839.0 208.4 L845.0 231.0 L850.5 208.4 L870.0 208.4 L858.9 253.2 L836.0 253.2 L831.5 244.0 L827.0 253.2 L802.5 253.2Z" transform="translate(1,6)"/><path d="M794.0 208.4 L812.5 208.4 L817.0 231.0 L822.5 208.4 L839.0 208.4 L845.0 231.0 L850.5 208.4 L870.0 208.4 L858.9 253.2 L836.0 253.2 L831.5 244.0 L827.0 253.2 L802.5 253.2Z" transform="translate(1,7)"/><path d="M794.0 208.4 L812.5 208.4 L817.0 231.0 L822.5 208.4 L839.0 208.4 L845.0 231.0 L850.5 208.4 L870.0 208.4 L858.9 253.2 L836.0 253.2 L831.5 244.0 L827.0 253.2 L802.5 253.2Z" transform="translate(1,8)"/><path d="M794.0 208.4 L812.5 208.4 L817.0 231.0 L822.5 208.4 L839.0 208.4 L845.0 231.0 L850.5 208.4 L870.0 208.4 L858.9 253.2 L836.0 253.2 L831.5 244.0 L827.0 253.2 L802.5 253.2Z" transform="translate(1,9)"/><path d="M794.0 208.4 L812.5 208.4 L817.0 231.0 L822.5 208.4 L839.0 208.4 L845.0 231.0 L850.5 208.4 L870.0 208.4 L858.9 253.2 L836.0 253.2 L831.5 244.0 L827.0 253.2 L802.5 253.2Z" transform="translate(1,10)"/><path d="M794.0 208.4 L812.5 208.4 L817.0 231.0 L822.5 208.4 L839.0 208.4 L845.0 231.0 L850.5 208.4 L870.0 208.4 L858.9 253.2 L836.0 253.2 L831.5 244.0 L827.0 253.2 L802.5 253.2Z" transform="translate(1,11)"/><path d="M794.0 208.4 L812.5 208.4 L817.0 231.0 L822.5 208.4 L839.0 208.4 L845.0 231.0 L850.5 208.4 L870.0 208.4 L858.9 253.2 L836.0 253.2 L831.5 244.0 L827.0 253.2 L802.5 253.2Z" transform="translate(1,12)"/><path d="M794.0 208.4 L812.5 208.4 L817.0 231.0 L822.5 208.4 L839.0 208.4 L845.0 231.0 L850.5 208.4 L870.0 208.4 L858.9 253.2 L836.0 253.2 L831.5 244.0 L827.0 253.2 L802.5 253.2Z" transform="translate(1,13)"/><path d="M873.0 209.1 L906.9 209.1 L906.9 220.7 L887.7 220.7 L887.7 228.7 L902.5 228.7 L902.5 237.6 L887.7 237.6 L887.7 245.6 L904.0 245.6 L904.0 255.4 L873.0 255.4Z" transform="translate(1,4)"/><path d="M873.0 209.1 L906.9 209.1 L906.9 220.7 L902.5 228.7 L902.5 237.6 L904.0 245.6 L904.0 255.4 L873.0 255.4Z" transform="translate(1,14)"/><path d="M873.0 209.1 L906.9 209.1 L906.9 220.7 L902.5 228.7 L902.5 237.6 L904.0 245.6 L904.0 255.4 L873.0 255.4Z" transform="translate(1,5)"/><path d="M873.0 209.1 L906.9 209.1 L906.9 220.7 L902.5 228.7 L902.5 237.6 L904.0 245.6 L904.0 255.4 L873.0 255.4Z" transform="translate(1,6)"/><path d="M873.0 209.1 L906.9 209.1 L906.9 220.7 L902.5 228.7 L902.5 237.6 L904.0 245.6 L904.0 255.4 L873.0 255.4Z" transform="translate(1,7)"/><path d="M873.0 209.1 L906.9 209.1 L906.9 220.7 L902.5 228.7 L902.5 237.6 L904.0 245.6 L904.0 255.4 L873.0 255.4Z" transform="translate(1,8)"/><path d="M873.0 209.1 L906.9 209.1 L906.9 220.7 L902.5 228.7 L902.5 237.6 L904.0 245.6 L904.0 255.4 L873.0 255.4Z" transform="translate(1,9)"/><path d="M873.0 209.1 L906.9 209.1 L906.9 220.7 L902.5 228.7 L902.5 237.6 L904.0 245.6 L904.0 255.4 L873.0 255.4Z" transform="translate(1,10)"/><path d="M873.0 209.1 L906.9 209.1 L906.9 220.7 L902.5 228.7 L902.5 237.6 L904.0 245.6 L904.0 255.4 L873.0 255.4Z" transform="translate(1,11)"/><path d="M873.0 209.1 L906.9 209.1 L906.9 220.7 L902.5 228.7 L902.5 237.6 L904.0 245.6 L904.0 255.4 L873.0 255.4Z" transform="translate(1,12)"/><path d="M873.0 209.1 L906.9 209.1 L906.9 220.7 L902.5 228.7 L902.5 237.6 L904.0 245.6 L904.0 255.4 L873.0 255.4Z" transform="translate(1,13)"/><path d="M911.3 211 L935 211 C949 211 954 220 954 229 C954 237 951 242 946 244.5 L953.5 259 L936 259 L929.5 247 L928.5 247 L928.5 259 L911.3 259Z" transform="translate(1,4)"/><path d="M911.3 211 L935 211 C949 211 954 220 954 229 C954 237 951 242 946 244.5 L953.5 259 L936 259 L929.5 247 L928.5 247 L928.5 259 L911.3 259Z" transform="translate(1,14)"/><path d="M911.3 211 L935 211 C949 211 954 220 954 229 C954 237 951 242 946 244.5 L953.5 259 L936 259 L929.5 247 L928.5 247 L928.5 259 L911.3 259Z" transform="translate(1,5)"/><path d="M911.3 211 L935 211 C949 211 954 220 954 229 C954 237 951 242 946 244.5 L953.5 259 L936 259 L929.5 247 L928.5 247 L928.5 259 L911.3 259Z" transform="translate(1,6)"/><path d="M911.3 211 L935 211 C949 211 954 220 954 229 C954 237 951 242 946 244.5 L953.5 259 L936 259 L929.5 247 L928.5 247 L928.5 259 L911.3 259Z" transform="translate(1,7)"/><path d="M911.3 211 L935 211 C949 211 954 220 954 229 C954 237 951 242 946 244.5 L953.5 259 L936 259 L929.5 247 L928.5 247 L928.5 259 L911.3 259Z" transform="translate(1,8)"/><path d="M911.3 211 L935 211 C949 211 954 220 954 229 C954 237 951 242 946 244.5 L953.5 259 L936 259 L929.5 247 L928.5 247 L928.5 259 L911.3 259Z" transform="translate(1,9)"/><path d="M911.3 211 L935 211 C949 211 954 220 954 229 C954 237 951 242 946 244.5 L953.5 259 L936 259 L929.5 247 L928.5 247 L928.5 259 L911.3 259Z" transform="translate(1,10)"/><path d="M911.3 211 L935 211 C949 211 954 220 954 229 C954 237 951 242 946 244.5 L953.5 259 L936 259 L929.5 247 L928.5 247 L928.5 259 L911.3 259Z" transform="translate(1,11)"/><path d="M911.3 211 L935 211 C949 211 954 220 954 229 C954 237 951 242 946 244.5 L953.5 259 L936 259 L929.5 247 L928.5 247 L928.5 259 L911.3 259Z" transform="translate(1,12)"/><path d="M911.3 211 L935 211 C949 211 954 220 954 229 C954 237 951 242 946 244.5 L953.5 259 L936 259 L929.5 247 L928.5 247 L928.5 259 L911.3 259Z" transform="translate(1,13)"/></g>
<g fill="#fff" stroke="#fff" stroke-width="9" stroke-linejoin="round"><path d="M696.8 215.6 L736.8 212.7 L736.8 228.0 L731.0 228.3 L731.0 260.5 L709.0 260.5 L709.0 229.0 L696.8 229.5Z" transform="translate(0,0)"/><path d="M696.8 215.6 L736.8 212.7 L736.8 228.0 L731.0 228.3 L731.0 260.5 L709.0 260.5 L709.0 229.0 L696.8 229.5Z" transform="translate(0,1)"/><path d="M696.8 215.6 L736.8 212.7 L736.8 228.0 L731.0 228.3 L731.0 260.5 L709.0 260.5 L709.0 229.0 L696.8 229.5Z" transform="translate(0,2)"/><path d="M696.8 215.6 L736.8 212.7 L736.8 228.0 L731.0 228.3 L731.0 260.5 L709.0 260.5 L709.0 229.0 L696.8 229.5Z" transform="translate(0,3)"/><path d="M696.8 215.6 L736.8 212.7 L736.8 228.0 L731.0 228.3 L731.0 260.5 L709.0 260.5 L709.0 229.0 L696.8 229.5Z" transform="translate(0,4)"/><path d="M696.8 215.6 L736.8 212.7 L736.8 228.0 L731.0 228.3 L731.0 260.5 L709.0 260.5 L709.0 229.0 L696.8 229.5Z" transform="translate(0,5)"/><path d="M696.8 215.6 L736.8 212.7 L736.8 228.0 L731.0 228.3 L731.0 260.5 L709.0 260.5 L709.0 229.0 L696.8 229.5Z" transform="translate(0,6)"/><path d="M696.8 215.6 L736.8 212.7 L736.8 228.0 L731.0 228.3 L731.0 260.5 L709.0 260.5 L709.0 229.0 L696.8 229.5Z" transform="translate(0,7)"/><path d="M696.8 215.6 L736.8 212.7 L736.8 228.0 L731.0 228.3 L731.0 260.5 L709.0 260.5 L709.0 229.0 L696.8 229.5Z" transform="translate(0,8)"/><path d="M696.8 215.6 L736.8 212.7 L736.8 228.0 L731.0 228.3 L731.0 260.5 L709.0 260.5 L709.0 229.0 L696.8 229.5Z" transform="translate(0,9)"/><path d="M696.8 215.6 L736.8 212.7 L736.8 228.0 L731.0 228.3 L731.0 260.5 L709.0 260.5 L709.0 229.0 L696.8 229.5Z" transform="translate(0,10)"/></g>
<g fill="#0c47c9" stroke="#0c47c9" stroke-width="1.2" stroke-linejoin="round"><path d="M696.8 215.6 L736.8 212.7 L736.8 228.0 L731.0 228.3 L731.0 260.5 L709.0 260.5 L709.0 229.0 L696.8 229.5Z" transform="translate(0,1)"/><path d="M696.8 215.6 L736.8 212.7 L736.8 228.0 L731.0 228.3 L731.0 260.5 L709.0 260.5 L709.0 229.0 L696.8 229.5Z" transform="translate(0,2)"/><path d="M696.8 215.6 L736.8 212.7 L736.8 228.0 L731.0 228.3 L731.0 260.5 L709.0 260.5 L709.0 229.0 L696.8 229.5Z" transform="translate(0,3)"/><path d="M696.8 215.6 L736.8 212.7 L736.8 228.0 L731.0 228.3 L731.0 260.5 L709.0 260.5 L709.0 229.0 L696.8 229.5Z" transform="translate(0,4)"/><path d="M696.8 215.6 L736.8 212.7 L736.8 228.0 L731.0 228.3 L731.0 260.5 L709.0 260.5 L709.0 229.0 L696.8 229.5Z" transform="translate(0,5)"/><path d="M696.8 215.6 L736.8 212.7 L736.8 228.0 L731.0 228.3 L731.0 260.5 L709.0 260.5 L709.0 229.0 L696.8 229.5Z" transform="translate(0,6)"/><path d="M696.8 215.6 L736.8 212.7 L736.8 228.0 L731.0 228.3 L731.0 260.5 L709.0 260.5 L709.0 229.0 L696.8 229.5Z" transform="translate(0,7)"/><path d="M696.8 215.6 L736.8 212.7 L736.8 228.0 L731.0 228.3 L731.0 260.5 L709.0 260.5 L709.0 229.0 L696.8 229.5Z" transform="translate(0,8)"/><path d="M696.8 215.6 L736.8 212.7 L736.8 228.0 L731.0 228.3 L731.0 260.5 L709.0 260.5 L709.0 229.0 L696.8 229.5Z" transform="translate(0,9)"/><path d="M696.8 215.6 L736.8 212.7 L736.8 228.0 L731.0 228.3 L731.0 260.5 L709.0 260.5 L709.0 229.0 L696.8 229.5Z" transform="translate(0,10)"/></g>
<g fill="#1a6be8" stroke="#1a6be8" stroke-width="1.2" stroke-linejoin="round"><path d="M696.8 215.6 L736.8 212.7 L736.8 228.0 L731.0 228.3 L731.0 260.5 L709.0 260.5 L709.0 229.0 L696.8 229.5Z" transform="translate(0,0)"/></g>
<g fill="#fff" stroke="#fff" stroke-width="9" stroke-linejoin="round"><path d="M765.7 208.3 C782 208.3 791.4 219 791.4 232.5 C791.4 246 782 256.7 765.7 256.7 C749.4 256.7 740 246 740 232.5 C740 219 749.4 208.3 765.7 208.3Z" transform="translate(0,0)"/><path d="M765.7 208.3 C782 208.3 791.4 219 791.4 232.5 C791.4 246 782 256.7 765.7 256.7 C749.4 256.7 740 246 740 232.5 C740 219 749.4 208.3 765.7 208.3Z" transform="translate(0,1)"/><path d="M765.7 208.3 C782 208.3 791.4 219 791.4 232.5 C791.4 246 782 256.7 765.7 256.7 C749.4 256.7 740 246 740 232.5 C740 219 749.4 208.3 765.7 208.3Z" transform="translate(0,2)"/><path d="M765.7 208.3 C782 208.3 791.4 219 791.4 232.5 C791.4 246 782 256.7 765.7 256.7 C749.4 256.7 740 246 740 232.5 C740 219 749.4 208.3 765.7 208.3Z" transform="translate(0,3)"/><path d="M765.7 208.3 C782 208.3 791.4 219 791.4 232.5 C791.4 246 782 256.7 765.7 256.7 C749.4 256.7 740 246 740 232.5 C740 219 749.4 208.3 765.7 208.3Z" transform="translate(0,4)"/><path d="M765.7 208.3 C782 208.3 791.4 219 791.4 232.5 C791.4 246 782 256.7 765.7 256.7 C749.4 256.7 740 246 740 232.5 C740 219 749.4 208.3 765.7 208.3Z" transform="translate(0,5)"/><path d="M765.7 208.3 C782 208.3 791.4 219 791.4 232.5 C791.4 246 782 256.7 765.7 256.7 C749.4 256.7 740 246 740 232.5 C740 219 749.4 208.3 765.7 208.3Z" transform="translate(0,6)"/><path d="M765.7 208.3 C782 208.3 791.4 219 791.4 232.5 C791.4 246 782 256.7 765.7 256.7 C749.4 256.7 740 246 740 232.5 C740 219 749.4 208.3 765.7 208.3Z" transform="translate(0,7)"/><path d="M765.7 208.3 C782 208.3 791.4 219 791.4 232.5 C791.4 246 782 256.7 765.7 256.7 C749.4 256.7 740 246 740 232.5 C740 219 749.4 208.3 765.7 208.3Z" transform="translate(0,8)"/><path d="M765.7 208.3 C782 208.3 791.4 219 791.4 232.5 C791.4 246 782 256.7 765.7 256.7 C749.4 256.7 740 246 740 232.5 C740 219 749.4 208.3 765.7 208.3Z" transform="translate(0,9)"/><path d="M765.7 208.3 C782 208.3 791.4 219 791.4 232.5 C791.4 246 782 256.7 765.7 256.7 C749.4 256.7 740 246 740 232.5 C740 219 749.4 208.3 765.7 208.3Z" transform="translate(0,10)"/></g>
<g fill="#0c47c9" stroke="#0c47c9" stroke-width="1.2" stroke-linejoin="round"><path d="M765.7 208.3 C782 208.3 791.4 219 791.4 232.5 C791.4 246 782 256.7 765.7 256.7 C749.4 256.7 740 246 740 232.5 C740 219 749.4 208.3 765.7 208.3Z" transform="translate(0,1)"/><path d="M765.7 208.3 C782 208.3 791.4 219 791.4 232.5 C791.4 246 782 256.7 765.7 256.7 C749.4 256.7 740 246 740 232.5 C740 219 749.4 208.3 765.7 208.3Z" transform="translate(0,2)"/><path d="M765.7 208.3 C782 208.3 791.4 219 791.4 232.5 C791.4 246 782 256.7 765.7 256.7 C749.4 256.7 740 246 740 232.5 C740 219 749.4 208.3 765.7 208.3Z" transform="translate(0,3)"/><path d="M765.7 208.3 C782 208.3 791.4 219 791.4 232.5 C791.4 246 782 256.7 765.7 256.7 C749.4 256.7 740 246 740 232.5 C740 219 749.4 208.3 765.7 208.3Z" transform="translate(0,4)"/><path d="M765.7 208.3 C782 208.3 791.4 219 791.4 232.5 C791.4 246 782 256.7 765.7 256.7 C749.4 256.7 740 246 740 232.5 C740 219 749.4 208.3 765.7 208.3Z" transform="translate(0,5)"/><path d="M765.7 208.3 C782 208.3 791.4 219 791.4 232.5 C791.4 246 782 256.7 765.7 256.7 C749.4 256.7 740 246 740 232.5 C740 219 749.4 208.3 765.7 208.3Z" transform="translate(0,6)"/><path d="M765.7 208.3 C782 208.3 791.4 219 791.4 232.5 C791.4 246 782 256.7 765.7 256.7 C749.4 256.7 740 246 740 232.5 C740 219 749.4 208.3 765.7 208.3Z" transform="translate(0,7)"/><path d="M765.7 208.3 C782 208.3 791.4 219 791.4 232.5 C791.4 246 782 256.7 765.7 256.7 C749.4 256.7 740 246 740 232.5 C740 219 749.4 208.3 765.7 208.3Z" transform="translate(0,8)"/><path d="M765.7 208.3 C782 208.3 791.4 219 791.4 232.5 C791.4 246 782 256.7 765.7 256.7 C749.4 256.7 740 246 740 232.5 C740 219 749.4 208.3 765.7 208.3Z" transform="translate(0,9)"/><path d="M765.7 208.3 C782 208.3 791.4 219 791.4 232.5 C791.4 246 782 256.7 765.7 256.7 C749.4 256.7 740 246 740 232.5 C740 219 749.4 208.3 765.7 208.3Z" transform="translate(0,10)"/></g>
<g fill="#1a6be8" stroke="#1a6be8" stroke-width="1.2" stroke-linejoin="round"><path d="M765.7 208.3 C782 208.3 791.4 219 791.4 232.5 C791.4 246 782 256.7 765.7 256.7 C749.4 256.7 740 246 740 232.5 C740 219 749.4 208.3 765.7 208.3Z" transform="translate(0,0)"/></g>
<g fill="#fff" stroke="#fff" stroke-width="9" stroke-linejoin="round"><path d="M794.0 208.4 L812.5 208.4 L817.0 231.0 L822.5 208.4 L839.0 208.4 L845.0 231.0 L850.5 208.4 L870.0 208.4 L858.9 253.2 L836.0 253.2 L831.5 244.0 L827.0 253.2 L802.5 253.2Z" transform="translate(0,0)"/><path d="M794.0 208.4 L812.5 208.4 L817.0 231.0 L822.5 208.4 L839.0 208.4 L845.0 231.0 L850.5 208.4 L870.0 208.4 L858.9 253.2 L836.0 253.2 L831.5 244.0 L827.0 253.2 L802.5 253.2Z" transform="translate(0,1)"/><path d="M794.0 208.4 L812.5 208.4 L817.0 231.0 L822.5 208.4 L839.0 208.4 L845.0 231.0 L850.5 208.4 L870.0 208.4 L858.9 253.2 L836.0 253.2 L831.5 244.0 L827.0 253.2 L802.5 253.2Z" transform="translate(0,2)"/><path d="M794.0 208.4 L812.5 208.4 L817.0 231.0 L822.5 208.4 L839.0 208.4 L845.0 231.0 L850.5 208.4 L870.0 208.4 L858.9 253.2 L836.0 253.2 L831.5 244.0 L827.0 253.2 L802.5 253.2Z" transform="translate(0,3)"/><path d="M794.0 208.4 L812.5 208.4 L817.0 231.0 L822.5 208.4 L839.0 208.4 L845.0 231.0 L850.5 208.4 L870.0 208.4 L858.9 253.2 L836.0 253.2 L831.5 244.0 L827.0 253.2 L802.5 253.2Z" transform="translate(0,4)"/><path d="M794.0 208.4 L812.5 208.4 L817.0 231.0 L822.5 208.4 L839.0 208.4 L845.0 231.0 L850.5 208.4 L870.0 208.4 L858.9 253.2 L836.0 253.2 L831.5 244.0 L827.0 253.2 L802.5 253.2Z" transform="translate(0,5)"/><path d="M794.0 208.4 L812.5 208.4 L817.0 231.0 L822.5 208.4 L839.0 208.4 L845.0 231.0 L850.5 208.4 L870.0 208.4 L858.9 253.2 L836.0 253.2 L831.5 244.0 L827.0 253.2 L802.5 253.2Z" transform="translate(0,6)"/><path d="M794.0 208.4 L812.5 208.4 L817.0 231.0 L822.5 208.4 L839.0 208.4 L845.0 231.0 L850.5 208.4 L870.0 208.4 L858.9 253.2 L836.0 253.2 L831.5 244.0 L827.0 253.2 L802.5 253.2Z" transform="translate(0,7)"/><path d="M794.0 208.4 L812.5 208.4 L817.0 231.0 L822.5 208.4 L839.0 208.4 L845.0 231.0 L850.5 208.4 L870.0 208.4 L858.9 253.2 L836.0 253.2 L831.5 244.0 L827.0 253.2 L802.5 253.2Z" transform="translate(0,8)"/><path d="M794.0 208.4 L812.5 208.4 L817.0 231.0 L822.5 208.4 L839.0 208.4 L845.0 231.0 L850.5 208.4 L870.0 208.4 L858.9 253.2 L836.0 253.2 L831.5 244.0 L827.0 253.2 L802.5 253.2Z" transform="translate(0,9)"/><path d="M794.0 208.4 L812.5 208.4 L817.0 231.0 L822.5 208.4 L839.0 208.4 L845.0 231.0 L850.5 208.4 L870.0 208.4 L858.9 253.2 L836.0 253.2 L831.5 244.0 L827.0 253.2 L802.5 253.2Z" transform="translate(0,10)"/></g>
<g fill="#0c47c9" stroke="#0c47c9" stroke-width="1.2" stroke-linejoin="round"><path d="M794.0 208.4 L812.5 208.4 L817.0 231.0 L822.5 208.4 L839.0 208.4 L845.0 231.0 L850.5 208.4 L870.0 208.4 L858.9 253.2 L836.0 253.2 L831.5 244.0 L827.0 253.2 L802.5 253.2Z" transform="translate(0,1)"/><path d="M794.0 208.4 L812.5 208.4 L817.0 231.0 L822.5 208.4 L839.0 208.4 L845.0 231.0 L850.5 208.4 L870.0 208.4 L858.9 253.2 L836.0 253.2 L831.5 244.0 L827.0 253.2 L802.5 253.2Z" transform="translate(0,2)"/><path d="M794.0 208.4 L812.5 208.4 L817.0 231.0 L822.5 208.4 L839.0 208.4 L845.0 231.0 L850.5 208.4 L870.0 208.4 L858.9 253.2 L836.0 253.2 L831.5 244.0 L827.0 253.2 L802.5 253.2Z" transform="translate(0,3)"/><path d="M794.0 208.4 L812.5 208.4 L817.0 231.0 L822.5 208.4 L839.0 208.4 L845.0 231.0 L850.5 208.4 L870.0 208.4 L858.9 253.2 L836.0 253.2 L831.5 244.0 L827.0 253.2 L802.5 253.2Z" transform="translate(0,4)"/><path d="M794.0 208.4 L812.5 208.4 L817.0 231.0 L822.5 208.4 L839.0 208.4 L845.0 231.0 L850.5 208.4 L870.0 208.4 L858.9 253.2 L836.0 253.2 L831.5 244.0 L827.0 253.2 L802.5 253.2Z" transform="translate(0,5)"/><path d="M794.0 208.4 L812.5 208.4 L817.0 231.0 L822.5 208.4 L839.0 208.4 L845.0 231.0 L850.5 208.4 L870.0 208.4 L858.9 253.2 L836.0 253.2 L831.5 244.0 L827.0 253.2 L802.5 253.2Z" transform="translate(0,6)"/><path d="M794.0 208.4 L812.5 208.4 L817.0 231.0 L822.5 208.4 L839.0 208.4 L845.0 231.0 L850.5 208.4 L870.0 208.4 L858.9 253.2 L836.0 253.2 L831.5 244.0 L827.0 253.2 L802.5 253.2Z" transform="translate(0,7)"/><path d="M794.0 208.4 L812.5 208.4 L817.0 231.0 L822.5 208.4 L839.0 208.4 L845.0 231.0 L850.5 208.4 L870.0 208.4 L858.9 253.2 L836.0 253.2 L831.5 244.0 L827.0 253.2 L802.5 253.2Z" transform="translate(0,8)"/><path d="M794.0 208.4 L812.5 208.4 L817.0 231.0 L822.5 208.4 L839.0 208.4 L845.0 231.0 L850.5 208.4 L870.0 208.4 L858.9 253.2 L836.0 253.2 L831.5 244.0 L827.0 253.2 L802.5 253.2Z" transform="translate(0,9)"/><path d="M794.0 208.4 L812.5 208.4 L817.0 231.0 L822.5 208.4 L839.0 208.4 L845.0 231.0 L850.5 208.4 L870.0 208.4 L858.9 253.2 L836.0 253.2 L831.5 244.0 L827.0 253.2 L802.5 253.2Z" transform="translate(0,10)"/></g>
<g fill="#1a6be8" stroke="#1a6be8" stroke-width="1.2" stroke-linejoin="round"><path d="M794.0 208.4 L812.5 208.4 L817.0 231.0 L822.5 208.4 L839.0 208.4 L845.0 231.0 L850.5 208.4 L870.0 208.4 L858.9 253.2 L836.0 253.2 L831.5 244.0 L827.0 253.2 L802.5 253.2Z" transform="translate(0,0)"/></g>
<g fill="#fff" stroke="#fff" stroke-width="9" stroke-linejoin="round"><path d="M873.0 209.1 L906.9 209.1 L906.9 220.7 L887.7 220.7 L887.7 228.7 L902.5 228.7 L902.5 237.6 L887.7 237.6 L887.7 245.6 L904.0 245.6 L904.0 255.4 L873.0 255.4Z" transform="translate(0,0)"/><path d="M873.0 209.1 L906.9 209.1 L906.9 220.7 L902.5 228.7 L902.5 237.6 L904.0 245.6 L904.0 255.4 L873.0 255.4Z" transform="translate(0,1)"/><path d="M873.0 209.1 L906.9 209.1 L906.9 220.7 L902.5 228.7 L902.5 237.6 L904.0 245.6 L904.0 255.4 L873.0 255.4Z" transform="translate(0,2)"/><path d="M873.0 209.1 L906.9 209.1 L906.9 220.7 L902.5 228.7 L902.5 237.6 L904.0 245.6 L904.0 255.4 L873.0 255.4Z" transform="translate(0,3)"/><path d="M873.0 209.1 L906.9 209.1 L906.9 220.7 L902.5 228.7 L902.5 237.6 L904.0 245.6 L904.0 255.4 L873.0 255.4Z" transform="translate(0,4)"/><path d="M873.0 209.1 L906.9 209.1 L906.9 220.7 L902.5 228.7 L902.5 237.6 L904.0 245.6 L904.0 255.4 L873.0 255.4Z" transform="translate(0,5)"/><path d="M873.0 209.1 L906.9 209.1 L906.9 220.7 L902.5 228.7 L902.5 237.6 L904.0 245.6 L904.0 255.4 L873.0 255.4Z" transform="translate(0,6)"/><path d="M873.0 209.1 L906.9 209.1 L906.9 220.7 L902.5 228.7 L902.5 237.6 L904.0 245.6 L904.0 255.4 L873.0 255.4Z" transform="translate(0,7)"/><path d="M873.0 209.1 L906.9 209.1 L906.9 220.7 L902.5 228.7 L902.5 237.6 L904.0 245.6 L904.0 255.4 L873.0 255.4Z" transform="translate(0,8)"/><path d="M873.0 209.1 L906.9 209.1 L906.9 220.7 L902.5 228.7 L902.5 237.6 L904.0 245.6 L904.0 255.4 L873.0 255.4Z" transform="translate(0,9)"/><path d="M873.0 209.1 L906.9 209.1 L906.9 220.7 L902.5 228.7 L902.5 237.6 L904.0 245.6 L904.0 255.4 L873.0 255.4Z" transform="translate(0,10)"/></g>
<g fill="#0c47c9" stroke="#0c47c9" stroke-width="1.2" stroke-linejoin="round"><path d="M873.0 209.1 L906.9 209.1 L906.9 220.7 L902.5 228.7 L902.5 237.6 L904.0 245.6 L904.0 255.4 L873.0 255.4Z" transform="translate(0,1)"/><path d="M873.0 209.1 L906.9 209.1 L906.9 220.7 L902.5 228.7 L902.5 237.6 L904.0 245.6 L904.0 255.4 L873.0 255.4Z" transform="translate(0,2)"/><path d="M873.0 209.1 L906.9 209.1 L906.9 220.7 L902.5 228.7 L902.5 237.6 L904.0 245.6 L904.0 255.4 L873.0 255.4Z" transform="translate(0,3)"/><path d="M873.0 209.1 L906.9 209.1 L906.9 220.7 L902.5 228.7 L902.5 237.6 L904.0 245.6 L904.0 255.4 L873.0 255.4Z" transform="translate(0,4)"/><path d="M873.0 209.1 L906.9 209.1 L906.9 220.7 L902.5 228.7 L902.5 237.6 L904.0 245.6 L904.0 255.4 L873.0 255.4Z" transform="translate(0,5)"/><path d="M873.0 209.1 L906.9 209.1 L906.9 220.7 L902.5 228.7 L902.5 237.6 L904.0 245.6 L904.0 255.4 L873.0 255.4Z" transform="translate(0,6)"/><path d="M873.0 209.1 L906.9 209.1 L906.9 220.7 L902.5 228.7 L902.5 237.6 L904.0 245.6 L904.0 255.4 L873.0 255.4Z" transform="translate(0,7)"/><path d="M873.0 209.1 L906.9 209.1 L906.9 220.7 L902.5 228.7 L902.5 237.6 L904.0 245.6 L904.0 255.4 L873.0 255.4Z" transform="translate(0,8)"/><path d="M873.0 209.1 L906.9 209.1 L906.9 220.7 L902.5 228.7 L902.5 237.6 L904.0 245.6 L904.0 255.4 L873.0 255.4Z" transform="translate(0,9)"/><path d="M873.0 209.1 L906.9 209.1 L906.9 220.7 L902.5 228.7 L902.5 237.6 L904.0 245.6 L904.0 255.4 L873.0 255.4Z" transform="translate(0,10)"/></g>
<g fill="#1a6be8" stroke="#1a6be8" stroke-width="1.2" stroke-linejoin="round"><path d="M873.0 209.1 L906.9 209.1 L906.9 220.7 L887.7 220.7 L887.7 228.7 L902.5 228.7 L902.5 237.6 L887.7 237.6 L887.7 245.6 L904.0 245.6 L904.0 255.4 L873.0 255.4Z" transform="translate(0,0)"/></g>
<g fill="#fff" stroke="#fff" stroke-width="9" stroke-linejoin="round"><path d="M911.3 211 L935 211 C949 211 954 220 954 229 C954 237 951 242 946 244.5 L953.5 259 L936 259 L929.5 247 L928.5 247 L928.5 259 L911.3 259Z" transform="translate(0,0)"/><path d="M911.3 211 L935 211 C949 211 954 220 954 229 C954 237 951 242 946 244.5 L953.5 259 L936 259 L929.5 247 L928.5 247 L928.5 259 L911.3 259Z" transform="translate(0,1)"/><path d="M911.3 211 L935 211 C949 211 954 220 954 229 C954 237 951 242 946 244.5 L953.5 259 L936 259 L929.5 247 L928.5 247 L928.5 259 L911.3 259Z" transform="translate(0,2)"/><path d="M911.3 211 L935 211 C949 211 954 220 954 229 C954 237 951 242 946 244.5 L953.5 259 L936 259 L929.5 247 L928.5 247 L928.5 259 L911.3 259Z" transform="translate(0,3)"/><path d="M911.3 211 L935 211 C949 211 954 220 954 229 C954 237 951 242 946 244.5 L953.5 259 L936 259 L929.5 247 L928.5 247 L928.5 259 L911.3 259Z" transform="translate(0,4)"/><path d="M911.3 211 L935 211 C949 211 954 220 954 229 C954 237 951 242 946 244.5 L953.5 259 L936 259 L929.5 247 L928.5 247 L928.5 259 L911.3 259Z" transform="translate(0,5)"/><path d="M911.3 211 L935 211 C949 211 954 220 954 229 C954 237 951 242 946 244.5 L953.5 259 L936 259 L929.5 247 L928.5 247 L928.5 259 L911.3 259Z" transform="translate(0,6)"/><path d="M911.3 211 L935 211 C949 211 954 220 954 229 C954 237 951 242 946 244.5 L953.5 259 L936 259 L929.5 247 L928.5 247 L928.5 259 L911.3 259Z" transform="translate(0,7)"/><path d="M911.3 211 L935 211 C949 211 954 220 954 229 C954 237 951 242 946 244.5 L953.5 259 L936 259 L929.5 247 L928.5 247 L928.5 259 L911.3 259Z" transform="translate(0,8)"/><path d="M911.3 211 L935 211 C949 211 954 220 954 229 C954 237 951 242 946 244.5 L953.5 259 L936 259 L929.5 247 L928.5 247 L928.5 259 L911.3 259Z" transform="translate(0,9)"/><path d="M911.3 211 L935 211 C949 211 954 220 954 229 C954 237 951 242 946 244.5 L953.5 259 L936 259 L929.5 247 L928.5 247 L928.5 259 L911.3 259Z" transform="translate(0,10)"/></g>
<g fill="#0c47c9" stroke="#0c47c9" stroke-width="1.2" stroke-linejoin="round"><path d="M911.3 211 L935 211 C949 211 954 220 954 229 C954 237 951 242 946 244.5 L953.5 259 L936 259 L929.5 247 L928.5 247 L928.5 259 L911.3 259Z" transform="translate(0,1)"/><path d="M911.3 211 L935 211 C949 211 954 220 954 229 C954 237 951 242 946 244.5 L953.5 259 L936 259 L929.5 247 L928.5 247 L928.5 259 L911.3 259Z" transform="translate(0,2)"/><path d="M911.3 211 L935 211 C949 211 954 220 954 229 C954 237 951 242 946 244.5 L953.5 259 L936 259 L929.5 247 L928.5 247 L928.5 259 L911.3 259Z" transform="translate(0,3)"/><path d="M911.3 211 L935 211 C949 211 954 220 954 229 C954 237 951 242 946 244.5 L953.5 259 L936 259 L929.5 247 L928.5 247 L928.5 259 L911.3 259Z" transform="translate(0,4)"/><path d="M911.3 211 L935 211 C949 211 954 220 954 229 C954 237 951 242 946 244.5 L953.5 259 L936 259 L929.5 247 L928.5 247 L928.5 259 L911.3 259Z" transform="translate(0,5)"/><path d="M911.3 211 L935 211 C949 211 954 220 954 229 C954 237 951 242 946 244.5 L953.5 259 L936 259 L929.5 247 L928.5 247 L928.5 259 L911.3 259Z" transform="translate(0,6)"/><path d="M911.3 211 L935 211 C949 211 954 220 954 229 C954 237 951 242 946 244.5 L953.5 259 L936 259 L929.5 247 L928.5 247 L928.5 259 L911.3 259Z" transform="translate(0,7)"/><path d="M911.3 211 L935 211 C949 211 954 220 954 229 C954 237 951 242 946 244.5 L953.5 259 L936 259 L929.5 247 L928.5 247 L928.5 259 L911.3 259Z" transform="translate(0,8)"/><path d="M911.3 211 L935 211 C949 211 954 220 954 229 C954 237 951 242 946 244.5 L953.5 259 L936 259 L929.5 247 L928.5 247 L928.5 259 L911.3 259Z" transform="translate(0,9)"/><path d="M911.3 211 L935 211 C949 211 954 220 954 229 C954 237 951 242 946 244.5 L953.5 259 L936 259 L929.5 247 L928.5 247 L928.5 259 L911.3 259Z" transform="translate(0,10)"/></g>
<g fill="#1a6be8" stroke="#1a6be8" stroke-width="1.2" stroke-linejoin="round"><path d="M911.3 211 L935 211 C949 211 954 220 954 229 C954 237 951 242 946 244.5 L953.5 259 L936 259 L929.5 247 L928.5 247 L928.5 259 L911.3 259Z" transform="translate(0,0)"/></g>
<ellipse cx="767.5" cy="229" rx="7.5" ry="10" fill="#0d47c8"/><ellipse cx="767" cy="238" rx="6.8" ry="5.3" fill="#fff"/><ellipse cx="767" cy="239" rx="3" ry="2" fill="#a9c3e0"/><ellipse cx="931" cy="229" rx="4" ry="5.5" fill="#0d47c8"/>
<!-- WAR -->
<g fill="#9cb5dc" stroke="#9cb5dc" stroke-width="9" stroke-linejoin="round"><path d="M722.4 290.5 L744.0 290.5 L749.5 334.0 L755.0 290.5 L777.0 290.5 L783.0 335.0 L789.0 290.5 L812.0 290.5 L802.9 357.6 L774.0 357.6 L767.0 331.0 L760.0 357.6 L731.5 357.6Z" transform="translate(-1,5)"/><path d="M722.4 290.5 L744.0 290.5 L749.5 334.0 L755.0 290.5 L777.0 290.5 L783.0 335.0 L789.0 290.5 L812.0 290.5 L802.9 357.6 L774.0 357.6 L767.0 331.0 L760.0 357.6 L731.5 357.6Z" transform="translate(-1,13)"/><path d="M722.4 290.5 L744.0 290.5 L749.5 334.0 L755.0 290.5 L777.0 290.5 L783.0 335.0 L789.0 290.5 L812.0 290.5 L802.9 357.6 L774.0 357.6 L767.0 331.0 L760.0 357.6 L731.5 357.6Z" transform="translate(-1,6)"/><path d="M722.4 290.5 L744.0 290.5 L749.5 334.0 L755.0 290.5 L777.0 290.5 L783.0 335.0 L789.0 290.5 L812.0 290.5 L802.9 357.6 L774.0 357.6 L767.0 331.0 L760.0 357.6 L731.5 357.6Z" transform="translate(-1,7)"/><path d="M722.4 290.5 L744.0 290.5 L749.5 334.0 L755.0 290.5 L777.0 290.5 L783.0 335.0 L789.0 290.5 L812.0 290.5 L802.9 357.6 L774.0 357.6 L767.0 331.0 L760.0 357.6 L731.5 357.6Z" transform="translate(-1,8)"/><path d="M722.4 290.5 L744.0 290.5 L749.5 334.0 L755.0 290.5 L777.0 290.5 L783.0 335.0 L789.0 290.5 L812.0 290.5 L802.9 357.6 L774.0 357.6 L767.0 331.0 L760.0 357.6 L731.5 357.6Z" transform="translate(-1,9)"/><path d="M722.4 290.5 L744.0 290.5 L749.5 334.0 L755.0 290.5 L777.0 290.5 L783.0 335.0 L789.0 290.5 L812.0 290.5 L802.9 357.6 L774.0 357.6 L767.0 331.0 L760.0 357.6 L731.5 357.6Z" transform="translate(-1,10)"/><path d="M722.4 290.5 L744.0 290.5 L749.5 334.0 L755.0 290.5 L777.0 290.5 L783.0 335.0 L789.0 290.5 L812.0 290.5 L802.9 357.6 L774.0 357.6 L767.0 331.0 L760.0 357.6 L731.5 357.6Z" transform="translate(-1,11)"/><path d="M722.4 290.5 L744.0 290.5 L749.5 334.0 L755.0 290.5 L777.0 290.5 L783.0 335.0 L789.0 290.5 L812.0 290.5 L802.9 357.6 L774.0 357.6 L767.0 331.0 L760.0 357.6 L731.5 357.6Z" transform="translate(-1,12)"/><path d="M826.8 290.5 L853.7 290.5 L871.3 357.6 L850.0 357.6 L846.3 345.0 L833.0 345.0 L831.0 357.6 L810.4 357.6Z" transform="translate(-1,5)"/><path d="M826.8 290.5 L853.7 290.5 L871.3 357.6 L850.0 357.6 L846.3 345.0 L833.0 345.0 L831.0 357.6 L810.4 357.6Z" transform="translate(-1,13)"/><path d="M826.8 290.5 L853.7 290.5 L871.3 357.6 L850.0 357.6 L846.3 345.0 L833.0 345.0 L831.0 357.6 L810.4 357.6Z" transform="translate(-1,6)"/><path d="M826.8 290.5 L853.7 290.5 L871.3 357.6 L850.0 357.6 L846.3 345.0 L833.0 345.0 L831.0 357.6 L810.4 357.6Z" transform="translate(-1,7)"/><path d="M826.8 290.5 L853.7 290.5 L871.3 357.6 L850.0 357.6 L846.3 345.0 L833.0 345.0 L831.0 357.6 L810.4 357.6Z" transform="translate(-1,8)"/><path d="M826.8 290.5 L853.7 290.5 L871.3 357.6 L850.0 357.6 L846.3 345.0 L833.0 345.0 L831.0 357.6 L810.4 357.6Z" transform="translate(-1,9)"/><path d="M826.8 290.5 L853.7 290.5 L871.3 357.6 L850.0 357.6 L846.3 345.0 L833.0 345.0 L831.0 357.6 L810.4 357.6Z" transform="translate(-1,10)"/><path d="M826.8 290.5 L853.7 290.5 L871.3 357.6 L850.0 357.6 L846.3 345.0 L833.0 345.0 L831.0 357.6 L810.4 357.6Z" transform="translate(-1,11)"/><path d="M826.8 290.5 L853.7 290.5 L871.3 357.6 L850.0 357.6 L846.3 345.0 L833.0 345.0 L831.0 357.6 L810.4 357.6Z" transform="translate(-1,12)"/><path d="M874.4 290 L905 290 C920 290 925 300 925 311 C925 321 921 328 915 332 L928.5 357.6 L903 357.6 L897.6 341 L896.3 341 L896.3 357.6 L874.4 357.6Z" transform="translate(-1,5)"/><path d="M874.4 290 L905 290 C920 290 925 300 925 311 C925 321 921 328 915 332 L928.5 357.6 L903 357.6 L897.6 341 L896.3 341 L896.3 357.6 L874.4 357.6Z" transform="translate(-1,13)"/><path d="M874.4 290 L905 290 C920 290 925 300 925 311 C925 321 921 328 915 332 L928.5 357.6 L903 357.6 L897.6 341 L896.3 341 L896.3 357.6 L874.4 357.6Z" transform="translate(-1,6)"/><path d="M874.4 290 L905 290 C920 290 925 300 925 311 C925 321 921 328 915 332 L928.5 357.6 L903 357.6 L897.6 341 L896.3 341 L896.3 357.6 L874.4 357.6Z" transform="translate(-1,7)"/><path d="M874.4 290 L905 290 C920 290 925 300 925 311 C925 321 921 328 915 332 L928.5 357.6 L903 357.6 L897.6 341 L896.3 341 L896.3 357.6 L874.4 357.6Z" transform="translate(-1,8)"/><path d="M874.4 290 L905 290 C920 290 925 300 925 311 C925 321 921 328 915 332 L928.5 357.6 L903 357.6 L897.6 341 L896.3 341 L896.3 357.6 L874.4 357.6Z" transform="translate(-1,9)"/><path d="M874.4 290 L905 290 C920 290 925 300 925 311 C925 321 921 328 915 332 L928.5 357.6 L903 357.6 L897.6 341 L896.3 341 L896.3 357.6 L874.4 357.6Z" transform="translate(-1,10)"/><path d="M874.4 290 L905 290 C920 290 925 300 925 311 C925 321 921 328 915 332 L928.5 357.6 L903 357.6 L897.6 341 L896.3 341 L896.3 357.6 L874.4 357.6Z" transform="translate(-1,11)"/><path d="M874.4 290 L905 290 C920 290 925 300 925 311 C925 321 921 328 915 332 L928.5 357.6 L903 357.6 L897.6 341 L896.3 341 L896.3 357.6 L874.4 357.6Z" transform="translate(-1,12)"/></g>
<g fill="#fff" stroke="#fff" stroke-width="9" stroke-linejoin="round"><path d="M722.4 290.5 L744.0 290.5 L749.5 334.0 L755.0 290.5 L777.0 290.5 L783.0 335.0 L789.0 290.5 L812.0 290.5 L802.9 357.6 L774.0 357.6 L767.0 331.0 L760.0 357.6 L731.5 357.6Z" transform="translate(0,0)"/><path d="M722.4 290.5 L744.0 290.5 L749.5 334.0 L755.0 290.5 L777.0 290.5 L783.0 335.0 L789.0 290.5 L812.0 290.5 L802.9 357.6 L774.0 357.6 L767.0 331.0 L760.0 357.6 L731.5 357.6Z" transform="translate(0,1)"/><path d="M722.4 290.5 L744.0 290.5 L749.5 334.0 L755.0 290.5 L777.0 290.5 L783.0 335.0 L789.0 290.5 L812.0 290.5 L802.9 357.6 L774.0 357.6 L767.0 331.0 L760.0 357.6 L731.5 357.6Z" transform="translate(0,2)"/><path d="M722.4 290.5 L744.0 290.5 L749.5 334.0 L755.0 290.5 L777.0 290.5 L783.0 335.0 L789.0 290.5 L812.0 290.5 L802.9 357.6 L774.0 357.6 L767.0 331.0 L760.0 357.6 L731.5 357.6Z" transform="translate(0,3)"/><path d="M722.4 290.5 L744.0 290.5 L749.5 334.0 L755.0 290.5 L777.0 290.5 L783.0 335.0 L789.0 290.5 L812.0 290.5 L802.9 357.6 L774.0 357.6 L767.0 331.0 L760.0 357.6 L731.5 357.6Z" transform="translate(0,4)"/><path d="M722.4 290.5 L744.0 290.5 L749.5 334.0 L755.0 290.5 L777.0 290.5 L783.0 335.0 L789.0 290.5 L812.0 290.5 L802.9 357.6 L774.0 357.6 L767.0 331.0 L760.0 357.6 L731.5 357.6Z" transform="translate(0,5)"/><path d="M722.4 290.5 L744.0 290.5 L749.5 334.0 L755.0 290.5 L777.0 290.5 L783.0 335.0 L789.0 290.5 L812.0 290.5 L802.9 357.6 L774.0 357.6 L767.0 331.0 L760.0 357.6 L731.5 357.6Z" transform="translate(0,6)"/><path d="M722.4 290.5 L744.0 290.5 L749.5 334.0 L755.0 290.5 L777.0 290.5 L783.0 335.0 L789.0 290.5 L812.0 290.5 L802.9 357.6 L774.0 357.6 L767.0 331.0 L760.0 357.6 L731.5 357.6Z" transform="translate(0,7)"/><path d="M722.4 290.5 L744.0 290.5 L749.5 334.0 L755.0 290.5 L777.0 290.5 L783.0 335.0 L789.0 290.5 L812.0 290.5 L802.9 357.6 L774.0 357.6 L767.0 331.0 L760.0 357.6 L731.5 357.6Z" transform="translate(0,8)"/></g>
<g fill="#e62a16" stroke="#e62a16" stroke-width="1.2" stroke-linejoin="round"><path d="M722.4 290.5 L744.0 290.5 L749.5 334.0 L755.0 290.5 L777.0 290.5 L783.0 335.0 L789.0 290.5 L812.0 290.5 L802.9 357.6 L774.0 357.6 L767.0 331.0 L760.0 357.6 L731.5 357.6Z" transform="translate(0,1)"/><path d="M722.4 290.5 L744.0 290.5 L749.5 334.0 L755.0 290.5 L777.0 290.5 L783.0 335.0 L789.0 290.5 L812.0 290.5 L802.9 357.6 L774.0 357.6 L767.0 331.0 L760.0 357.6 L731.5 357.6Z" transform="translate(0,2)"/><path d="M722.4 290.5 L744.0 290.5 L749.5 334.0 L755.0 290.5 L777.0 290.5 L783.0 335.0 L789.0 290.5 L812.0 290.5 L802.9 357.6 L774.0 357.6 L767.0 331.0 L760.0 357.6 L731.5 357.6Z" transform="translate(0,3)"/><path d="M722.4 290.5 L744.0 290.5 L749.5 334.0 L755.0 290.5 L777.0 290.5 L783.0 335.0 L789.0 290.5 L812.0 290.5 L802.9 357.6 L774.0 357.6 L767.0 331.0 L760.0 357.6 L731.5 357.6Z" transform="translate(0,4)"/><path d="M722.4 290.5 L744.0 290.5 L749.5 334.0 L755.0 290.5 L777.0 290.5 L783.0 335.0 L789.0 290.5 L812.0 290.5 L802.9 357.6 L774.0 357.6 L767.0 331.0 L760.0 357.6 L731.5 357.6Z" transform="translate(0,5)"/><path d="M722.4 290.5 L744.0 290.5 L749.5 334.0 L755.0 290.5 L777.0 290.5 L783.0 335.0 L789.0 290.5 L812.0 290.5 L802.9 357.6 L774.0 357.6 L767.0 331.0 L760.0 357.6 L731.5 357.6Z" transform="translate(0,6)"/><path d="M722.4 290.5 L744.0 290.5 L749.5 334.0 L755.0 290.5 L777.0 290.5 L783.0 335.0 L789.0 290.5 L812.0 290.5 L802.9 357.6 L774.0 357.6 L767.0 331.0 L760.0 357.6 L731.5 357.6Z" transform="translate(0,7)"/><path d="M722.4 290.5 L744.0 290.5 L749.5 334.0 L755.0 290.5 L777.0 290.5 L783.0 335.0 L789.0 290.5 L812.0 290.5 L802.9 357.6 L774.0 357.6 L767.0 331.0 L760.0 357.6 L731.5 357.6Z" transform="translate(0,8)"/></g>
<g fill="url(#war)" stroke="url(#war)" stroke-width="1.2" stroke-linejoin="round"><path d="M722.4 290.5 L744.0 290.5 L749.5 334.0 L755.0 290.5 L777.0 290.5 L783.0 335.0 L789.0 290.5 L812.0 290.5 L802.9 357.6 L774.0 357.6 L767.0 331.0 L760.0 357.6 L731.5 357.6Z" transform="translate(0,0)"/></g>
<g fill="#fff" stroke="#fff" stroke-width="9" stroke-linejoin="round"><path d="M826.8 290.5 L853.7 290.5 L871.3 357.6 L850.0 357.6 L846.3 345.0 L833.0 345.0 L831.0 357.6 L810.4 357.6Z" transform="translate(0,0)"/><path d="M826.8 290.5 L853.7 290.5 L871.3 357.6 L850.0 357.6 L846.3 345.0 L833.0 345.0 L831.0 357.6 L810.4 357.6Z" transform="translate(0,1)"/><path d="M826.8 290.5 L853.7 290.5 L871.3 357.6 L850.0 357.6 L846.3 345.0 L833.0 345.0 L831.0 357.6 L810.4 357.6Z" transform="translate(0,2)"/><path d="M826.8 290.5 L853.7 290.5 L871.3 357.6 L850.0 357.6 L846.3 345.0 L833.0 345.0 L831.0 357.6 L810.4 357.6Z" transform="translate(0,3)"/><path d="M826.8 290.5 L853.7 290.5 L871.3 357.6 L850.0 357.6 L846.3 345.0 L833.0 345.0 L831.0 357.6 L810.4 357.6Z" transform="translate(0,4)"/><path d="M826.8 290.5 L853.7 290.5 L871.3 357.6 L850.0 357.6 L846.3 345.0 L833.0 345.0 L831.0 357.6 L810.4 357.6Z" transform="translate(0,5)"/><path d="M826.8 290.5 L853.7 290.5 L871.3 357.6 L850.0 357.6 L846.3 345.0 L833.0 345.0 L831.0 357.6 L810.4 357.6Z" transform="translate(0,6)"/><path d="M826.8 290.5 L853.7 290.5 L871.3 357.6 L850.0 357.6 L846.3 345.0 L833.0 345.0 L831.0 357.6 L810.4 357.6Z" transform="translate(0,7)"/><path d="M826.8 290.5 L853.7 290.5 L871.3 357.6 L850.0 357.6 L846.3 345.0 L833.0 345.0 L831.0 357.6 L810.4 357.6Z" transform="translate(0,8)"/></g>
<g fill="#e62a16" stroke="#e62a16" stroke-width="1.2" stroke-linejoin="round"><path d="M826.8 290.5 L853.7 290.5 L871.3 357.6 L850.0 357.6 L846.3 345.0 L833.0 345.0 L831.0 357.6 L810.4 357.6Z" transform="translate(0,1)"/><path d="M826.8 290.5 L853.7 290.5 L871.3 357.6 L850.0 357.6 L846.3 345.0 L833.0 345.0 L831.0 357.6 L810.4 357.6Z" transform="translate(0,2)"/><path d="M826.8 290.5 L853.7 290.5 L871.3 357.6 L850.0 357.6 L846.3 345.0 L833.0 345.0 L831.0 357.6 L810.4 357.6Z" transform="translate(0,3)"/><path d="M826.8 290.5 L853.7 290.5 L871.3 357.6 L850.0 357.6 L846.3 345.0 L833.0 345.0 L831.0 357.6 L810.4 357.6Z" transform="translate(0,4)"/><path d="M826.8 290.5 L853.7 290.5 L871.3 357.6 L850.0 357.6 L846.3 345.0 L833.0 345.0 L831.0 357.6 L810.4 357.6Z" transform="translate(0,5)"/><path d="M826.8 290.5 L853.7 290.5 L871.3 357.6 L850.0 357.6 L846.3 345.0 L833.0 345.0 L831.0 357.6 L810.4 357.6Z" transform="translate(0,6)"/><path d="M826.8 290.5 L853.7 290.5 L871.3 357.6 L850.0 357.6 L846.3 345.0 L833.0 345.0 L831.0 357.6 L810.4 357.6Z" transform="translate(0,7)"/><path d="M826.8 290.5 L853.7 290.5 L871.3 357.6 L850.0 357.6 L846.3 345.0 L833.0 345.0 L831.0 357.6 L810.4 357.6Z" transform="translate(0,8)"/></g>
<g fill="url(#war)" stroke="url(#war)" stroke-width="1.2" stroke-linejoin="round"><path d="M826.8 290.5 L853.7 290.5 L871.3 357.6 L850.0 357.6 L846.3 345.0 L833.0 345.0 L831.0 357.6 L810.4 357.6Z" transform="translate(0,0)"/></g>
<g fill="#fff" stroke="#fff" stroke-width="9" stroke-linejoin="round"><path d="M874.4 290 L905 290 C920 290 925 300 925 311 C925 321 921 328 915 332 L928.5 357.6 L903 357.6 L897.6 341 L896.3 341 L896.3 357.6 L874.4 357.6Z" transform="translate(0,0)"/><path d="M874.4 290 L905 290 C920 290 925 300 925 311 C925 321 921 328 915 332 L928.5 357.6 L903 357.6 L897.6 341 L896.3 341 L896.3 357.6 L874.4 357.6Z" transform="translate(0,1)"/><path d="M874.4 290 L905 290 C920 290 925 300 925 311 C925 321 921 328 915 332 L928.5 357.6 L903 357.6 L897.6 341 L896.3 341 L896.3 357.6 L874.4 357.6Z" transform="translate(0,2)"/><path d="M874.4 290 L905 290 C920 290 925 300 925 311 C925 321 921 328 915 332 L928.5 357.6 L903 357.6 L897.6 341 L896.3 341 L896.3 357.6 L874.4 357.6Z" transform="translate(0,3)"/><path d="M874.4 290 L905 290 C920 290 925 300 925 311 C925 321 921 328 915 332 L928.5 357.6 L903 357.6 L897.6 341 L896.3 341 L896.3 357.6 L874.4 357.6Z" transform="translate(0,4)"/><path d="M874.4 290 L905 290 C920 290 925 300 925 311 C925 321 921 328 915 332 L928.5 357.6 L903 357.6 L897.6 341 L896.3 341 L896.3 357.6 L874.4 357.6Z" transform="translate(0,5)"/><path d="M874.4 290 L905 290 C920 290 925 300 925 311 C925 321 921 328 915 332 L928.5 357.6 L903 357.6 L897.6 341 L896.3 341 L896.3 357.6 L874.4 357.6Z" transform="translate(0,6)"/><path d="M874.4 290 L905 290 C920 290 925 300 925 311 C925 321 921 328 915 332 L928.5 357.6 L903 357.6 L897.6 341 L896.3 341 L896.3 357.6 L874.4 357.6Z" transform="translate(0,7)"/><path d="M874.4 290 L905 290 C920 290 925 300 925 311 C925 321 921 328 915 332 L928.5 357.6 L903 357.6 L897.6 341 L896.3 341 L896.3 357.6 L874.4 357.6Z" transform="translate(0,8)"/></g>
<g fill="#e62a16" stroke="#e62a16" stroke-width="1.2" stroke-linejoin="round"><path d="M874.4 290 L905 290 C920 290 925 300 925 311 C925 321 921 328 915 332 L928.5 357.6 L903 357.6 L897.6 341 L896.3 341 L896.3 357.6 L874.4 357.6Z" transform="translate(0,1)"/><path d="M874.4 290 L905 290 C920 290 925 300 925 311 C925 321 921 328 915 332 L928.5 357.6 L903 357.6 L897.6 341 L896.3 341 L896.3 357.6 L874.4 357.6Z" transform="translate(0,2)"/><path d="M874.4 290 L905 290 C920 290 925 300 925 311 C925 321 921 328 915 332 L928.5 357.6 L903 357.6 L897.6 341 L896.3 341 L896.3 357.6 L874.4 357.6Z" transform="translate(0,3)"/><path d="M874.4 290 L905 290 C920 290 925 300 925 311 C925 321 921 328 915 332 L928.5 357.6 L903 357.6 L897.6 341 L896.3 341 L896.3 357.6 L874.4 357.6Z" transform="translate(0,4)"/><path d="M874.4 290 L905 290 C920 290 925 300 925 311 C925 321 921 328 915 332 L928.5 357.6 L903 357.6 L897.6 341 L896.3 341 L896.3 357.6 L874.4 357.6Z" transform="translate(0,5)"/><path d="M874.4 290 L905 290 C920 290 925 300 925 311 C925 321 921 328 915 332 L928.5 357.6 L903 357.6 L897.6 341 L896.3 341 L896.3 357.6 L874.4 357.6Z" transform="translate(0,6)"/><path d="M874.4 290 L905 290 C920 290 925 300 925 311 C925 321 921 328 915 332 L928.5 357.6 L903 357.6 L897.6 341 L896.3 341 L896.3 357.6 L874.4 357.6Z" transform="translate(0,7)"/><path d="M874.4 290 L905 290 C920 290 925 300 925 311 C925 321 921 328 915 332 L928.5 357.6 L903 357.6 L897.6 341 L896.3 341 L896.3 357.6 L874.4 357.6Z" transform="translate(0,8)"/></g>
<g fill="url(#war)" stroke="url(#war)" stroke-width="1.2" stroke-linejoin="round"><path d="M874.4 290 L905 290 C920 290 925 300 925 311 C925 321 921 328 915 332 L928.5 357.6 L903 357.6 L897.6 341 L896.3 341 L896.3 357.6 L874.4 357.6Z" transform="translate(0,0)"/></g>
<path d="M836 323 L839.5 311 L843 323Z" fill="#e62a16"/><path d="M837.3 323 L839.5 316 L841.7 323Z" fill="#fff"/><ellipse cx="898.5" cy="314" rx="4.2" ry="5.5" fill="#e62a16"/><ellipse cx="899" cy="317" rx="3" ry="2.5" fill="#fff"/>
<!-- soldier -->
<path d="M799.4 544 L849.9 544 L858.6 552 Q868 553 875 558 Q883 564 882 577 L770 577 Q769 564 776 558 Q783 553 794 553Z" fill="#1414a6"/>
<path d="M799.4 544 L849.9 544 L858.6 552 L826.8 567 L794 553Z" fill="#1b22cc"/>
<path d="M765.4 579.4 Q826.8 566 887.2 579.4 L846.6 602.4 Q826.8 612 811.5 604.6Z" fill="#1f4ae8"/>
<path d="M826.8 572 L826.8 608 L846.6 602.4 L887.2 579.4 Q856 572 826.8 572Z" fill="#2152f0"/>
<path d="M766 579 Q826.8 567 887 579" stroke="#3d6ef6" stroke-width="1.3" fill="none"/>
<path d="M825 413 C862 413 883 432 888 460 C892 476 898 486 905 494 C912 505 907 520 896 524 C889 527 881 525 876 520 L773 520 C769 525 761 527 754 524 C743 520 738 505 745 494 C752 486 758 476 762 460 C767 432 788 413 825 413Z" fill="#fff" stroke="#f4fffb" stroke-width="5" stroke-opacity="0.75"/>
<path d="M825 413 C862 413 883 432 888 460 C892 476 898 486 905 494 C912 505 907 520 896 524 C889 527 881 525 876 520 L773 520 C769 525 761 527 754 524 C743 520 738 505 745 494 C752 486 758 476 762 460 C767 432 788 413 825 413Z" fill="#2727da"/>
<path d="M763 458 Q825 447 887 458 L892 476 Q825 463 758 476Z" fill="#1e1ec4"/>
<path d="M752 510 Q825 470 898 510 L898 520 Q825 482 752 520Z" fill="#1c1cb8" opacity="0.8"/>
<ellipse cx="826" cy="514" rx="55" ry="32.5" fill="url(#face)"/>
<ellipse cx="857.5" cy="436" rx="4.6" ry="6.8" transform="rotate(-18 857.5 436)" fill="#f4f4ff"/>
<!-- play button -->
<rect x="726" y="655" width="203" height="62" rx="31" fill="#a8c7cf"/>
<rect x="724" y="653" width="202" height="62" rx="31" fill="url(#btn)" stroke="#5a3c12" stroke-width="1.6"/>
<rect x="740" y="657" width="170" height="10" rx="5" fill="#fff07a" opacity="0.6"/>
<text x="826" y="697" font-family="Liberation Sans" font-weight="bold" font-size="36" text-anchor="middle" textLength="82" lengthAdjust="spacingAndGlyphs" fill="#fff" stroke="#fff" stroke-width="2" stroke-linejoin="round">PLAY</text>
</svg>

<!-- Inspector -->
<div class="a" style="left:1229px;top:97px;width:371px;height:723px;background:#282828"></div>
<div class="tab" style="left:1229px;width:101px"></div>
<svg class="a" style="left:1239px;top:82px" width="11" height="11" viewBox="0 0 11 11"><circle cx="5.5" cy="5.5" r="5.5" fill="#bdbdbd"/><rect x="4.6" y="4.5" width="1.8" height="4.5" fill="#2b2b2b"/><rect x="4.6" y="2" width="1.8" height="1.6" fill="#2b2b2b"/></svg>
<div class="lt" style="left:1254px;top:80px;color:#bcbcbc">Inspector</div>
<svg class="a" style="left:1571px;top:81px" width="10" height="11" viewBox="0 0 10 11" fill="none" stroke="#aaa" stroke-width="1.3"><path d="M1.5 5.5V1.8A3 2.2 0 0 1 7 1.8"/><rect x="1" y="5.5" width="8" height="4.5"/></svg>
<div class="a" style="left:1593px;top:81px;width:3px;height:3px;background:#bbb;border-radius:50%;box-shadow:0 4px 0 #bbb,0 8px 0 #bbb"></div>

<!-- bottom -->
<div class="a" style="left:0;top:714px;width:1227px;height:22px;background:#1e1e1e;border-top:1px solid #161616"></div>
<div class="a" style="left:86px;top:715px;width:91px;height:21px;background:#2b2b2b;border-radius:3px 3px 0 0"></div>
<svg class="a" style="left:7px;top:721px" width="13" height="11" viewBox="0 0 13 11" fill="#b4b4b4"><path d="M0 0H5L6 1.5H13V11H0Z"/></svg>
<div class="lt" style="left:23px;top:719px;color:#bcbcbc">Project</div>
<svg class="a" style="left:94px;top:720px" width="11" height="12" viewBox="0 0 11 12" fill="none" stroke="#c0c0c0" stroke-width="1.3"><rect x="0.7" y="0.7" width="9.6" height="10.6"/><path d="M0.7 4H10.3M0.7 7.5H10.3M3 2.3H8.5"/></svg>
<div class="lt" style="left:110px;top:719px;color:#c4c4c4">Console</div>
<div class="a" style="left:1212px;top:720px;width:3px;height:3px;background:#bbb;border-radius:50%;box-shadow:0 4px 0 #bbb,0 8px 0 #bbb"></div>
<div class="bar" style="left:0;top:736px;width:1227px;height:21px"></div>
<div class="lt" style="left:4px;top:739px;color:#b8b8b8">Clear</div>
<div class="sep" style="left:41px;top:736px;height:21px;background:#262626"></div>
<svg class="a" style="left:46px;top:744px" width="9" height="6"><path d="M0 0H9L4.5 5.5Z" fill="#c4c4c4"/></svg>
<div class="sep" style="left:60px;top:736px;height:21px;background:#262626"></div>
<div class="a" style="left:61px;top:736px;width:62px;height:21px;background:#3b3b3b"></div>
<div class="lt" style="left:64px;top:739px;color:#acacac">Collapse</div>
<div class="sep" style="left:123px;top:736px;height:21px;background:#262626"></div>
<div class="a" style="left:124px;top:736px;width:78px;height:21px;background:#3b3b3b"></div>
<div class="lt" style="left:130px;top:739px;color:#acacac;letter-spacing:0px">Error Pause</div>
<div class="sep" style="left:202px;top:736px;height:21px;background:#262626"></div>
<div class="lt" style="left:206px;top:739px;color:#b8b8b8">Editor</div>
<svg class="a" style="left:244px;top:744px" width="9" height="6"><path d="M0 0H9L4.5 5.5Z" fill="#c4c4c4"/></svg>
<div class="sep" style="left:257px;top:736px;height:21px;background:#262626"></div>
<div class="a" style="left:795px;top:738px;width:315px;height:17px;background:#1f1f1f;border-radius:4px;border:1px solid #262626"></div>
<svg class="a" style="left:800px;top:742px" width="9" height="9" viewBox="0 0 9 9" fill="none" stroke="#aaa" stroke-width="1.3"><circle cx="3.5" cy="3.5" r="2.5"/><path d="M5.5 5.5L8.5 8.5"/></svg>
<div class="a" style="left:1112px;top:736px;width:43px;height:21px;background:#2f2f2f"></div>
<svg class="a" style="left:1118px;top:739px" width="15" height="15" viewBox="0 0 15 15"><circle cx="7" cy="7" r="6.5" fill="#d0d0d0"/><path d="M9 12L12 14L11.5 10Z" fill="#d0d0d0"/><rect x="6" y="3" width="2" height="5" fill="#333"/><rect x="6" y="9" width="2" height="2" fill="#333"/></svg>
<div class="lt" style="left:1134px;top:739px;color:#c0c0c0">20</div>
<div class="sep" style="left:1156px;top:736px;height:21px;background:#262626"></div>
<svg class="a" style="left:1162px;top:739px" width="14" height="13" viewBox="0 0 14 13"><path d="M7 0.5L13.5 12.5H0.5Z" fill="#8a8a8a"/><rect x="6.3" y="4" width="1.4" height="5" fill="#333"/><rect x="6.3" y="10" width="1.4" height="1.4" fill="#333"/></svg>
<div class="lt" style="left:1179px;top:739px;color:#b0b0b0">0</div>
<div class="sep" style="left:1191px;top:736px;height:21px;background:#262626"></div>
<div class="a" style="left:1192px;top:736px;width:35px;height:21px;background:#3a3a3a"></div>
<svg class="a" style="left:1197px;top:739px" width="14" height="14" viewBox="0 0 14 14"><path d="M4 0.5H10L13.5 4V10L10 13.5H4L0.5 10V4Z" fill="#c0c0c0"/><rect x="6.2" y="3" width="1.6" height="5" fill="#3a3a3a"/><rect x="6.2" y="9.2" width="1.6" height="1.6" fill="#3a3a3a"/></svg>
<div class="lt" style="left:1214px;top:739px;color:#aaa">0</div>
<div class="a" style="left:0;top:757px;width:1227px;height:63px;background:#282828"></div>
<div class="a" style="left:1322px;top:783px;color:#8e8e8e;font-size:28px;font-weight:bold;letter-spacing:-0.5px;white-space:nowrap">anysourcecode.com</div>
</body></html>
